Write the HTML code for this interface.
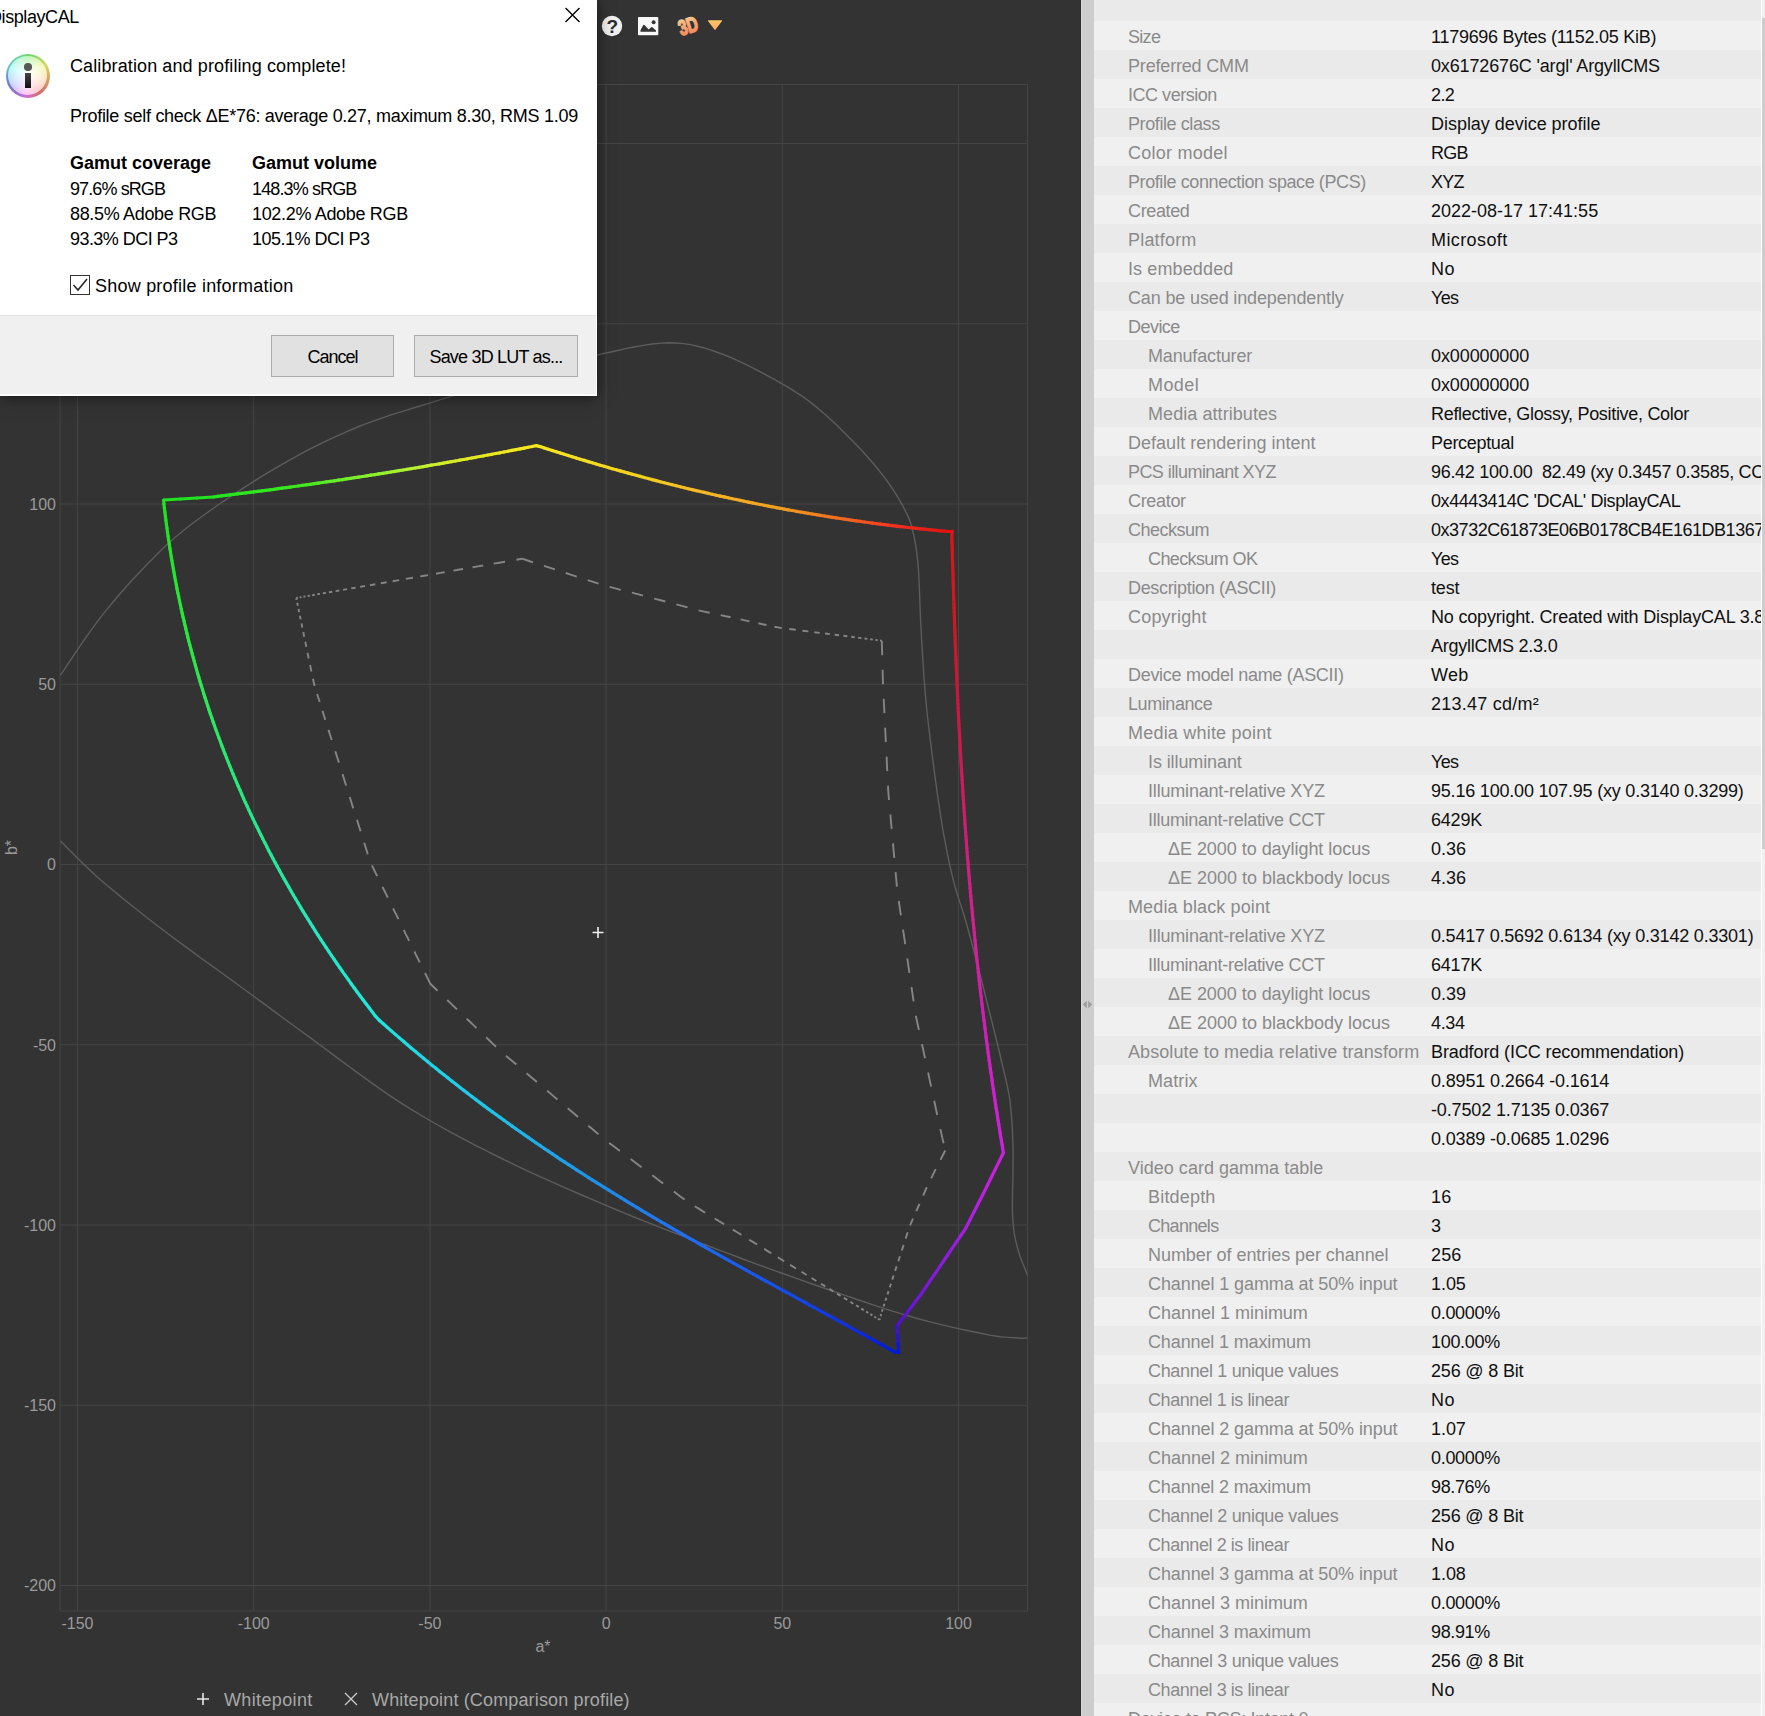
<!DOCTYPE html>
<html><head><meta charset="utf-8">
<style>
*{margin:0;padding:0;box-sizing:border-box}
html,body{width:1765px;height:1716px;overflow:hidden;background:#333333;font-family:"Liberation Sans",sans-serif}
#chart{position:absolute;left:0;top:0;width:1081px;height:1716px;background:#333333}
#strip{position:absolute;left:1080px;top:0;width:14px;height:1716px;background:#cdcdcd;border-left:1px solid #2b2b2b;box-shadow:inset 1px 0 0 #d9d9d9}
#panel{position:absolute;left:1094px;top:0;width:671px;height:1716px;background:#f0f0f0;overflow:hidden}
#panel .hdr{position:absolute;left:0;top:0;width:667px;height:21px;background:#eaeaea}
.r{position:absolute;left:0;width:667px;height:29px;background:#f0f0f0;font-size:18px;letter-spacing:-0.3px;white-space:nowrap}
.r.d{background:#eaeaea}
.r span{position:absolute;top:0;line-height:29px;padding-top:2px}
.r .l{color:#8a8a8a}
.r .v{left:337px;color:#111}
#sb{position:absolute;left:1761px;top:0;width:4px;height:1716px;background:#f0f0f0;border-left:1px solid #fff}
#sbt{position:absolute;left:1762px;top:18px;width:3px;height:831px;background:#cdcdcd}
#dlg{position:absolute;left:0;top:0;width:597px;height:396px;background:#fff;box-shadow:0 1px 14px rgba(0,0,0,0.55)}
#dlg .ft{position:absolute;left:0;top:315px;width:596px;height:79px;background:#f0f0f0;border-top:1px solid #e3e3e3}
#dlg .t{position:absolute;white-space:nowrap;font-size:18px;color:#000}
.btn{position:absolute;height:42px;background:#e1e1e1;border:1px solid #adadad;font-size:18px;color:#000;text-align:center;line-height:40px}
</style></head><body>
<div id="chart">
<svg width="1081" height="1716" style="position:absolute;left:0;top:0">
<defs><clipPath id="pc"><rect x="60" y="84.5" width="967.6" height="1526.5"/></clipPath></defs>
<path d="M77.5 84.5 V1611 M253.7 84.5 V1611 M429.9 84.5 V1611 M606.1 84.5 V1611 M782.3 84.5 V1611 M958.5 84.5 V1611 M60 143.5 H1027.6 M60 323.75 H1027.6 M60 504.0 H1027.6 M60 684.25 H1027.6 M60 864.5 H1027.6 M60 1044.75 H1027.6 M60 1225.0 H1027.6 M60 1405.25 H1027.6 M60 1585.5 H1027.6" stroke="#454545" stroke-width="1" fill="none"/>
<rect x="60.1" y="84.5" width="967.5" height="1526.5" stroke="#454545" stroke-width="1" fill="none"/>
<g font-family="Liberation Sans" font-size="16" fill="#9a9a9a"><text x="77.5" y="1629" text-anchor="middle">-150</text><text x="253.7" y="1629" text-anchor="middle">-100</text><text x="429.9" y="1629" text-anchor="middle">-50</text><text x="606.1" y="1629" text-anchor="middle">0</text><text x="782.3" y="1629" text-anchor="middle">50</text><text x="958.5" y="1629" text-anchor="middle">100</text><text x="56" y="149.3" text-anchor="end">200</text><text x="56" y="329.6" text-anchor="end">150</text><text x="56" y="509.8" text-anchor="end">100</text><text x="56" y="690.0" text-anchor="end">50</text><text x="56" y="870.3" text-anchor="end">0</text><text x="56" y="1050.5" text-anchor="end">-50</text><text x="56" y="1230.8" text-anchor="end">-100</text><text x="56" y="1411.0" text-anchor="end">-150</text><text x="56" y="1591.3" text-anchor="end">-200</text><text x="543" y="1652" text-anchor="middle">a*</text><text transform="translate(17 847.5) rotate(-90)" text-anchor="middle">b*</text></g>
<g clip-path="url(#pc)" fill="none" stroke="#5c5c5c" stroke-width="1.4"><path d="M60.3 675.4 L63.4 670.8 L67.5 664.7 L72.3 657.5 L77.7 649.4 L83.5 640.9 L89.5 632.3 L95.5 624.1 L101.3 616.4 L107.1 609.1 L113.3 601.7 L119.6 594.3 L126.0 587.0 L132.5 579.8 L138.9 572.9 L145.2 566.2 L151.3 560.0 L157.0 554.3 L162.3 549.1 L167.3 544.3 L172.4 539.7 L177.7 535.2 L183.4 530.5 L189.8 525.5 L197.1 520.0 L205.4 514.0 L214.4 507.5 L224.1 500.8 L234.3 494.0 L244.8 487.1 L255.3 480.3 L265.8 473.9 L276.0 467.8 L286.0 462.1 L295.9 456.6 L305.8 451.2 L315.8 446.1 L325.9 441.1 L336.2 436.3 L346.7 431.6 L357.6 427.0 L369.0 422.6 L381.0 418.3 L393.3 414.2 L405.8 410.3 L418.2 406.5 L430.3 402.8 L441.9 399.2 L452.8 395.8 L462.9 392.5 L472.5 389.4 L481.6 386.4 L490.3 383.6 L499.0 380.8 L507.5 378.2 L516.1 375.6 L525.0 373.0 L534.0 370.5 L543.0 368.0 L552.0 365.6 L561.0 363.3 L570.0 361.1 L579.0 359.0 L588.0 356.9 L597.0 355.0 L606.1 353.0 L615.4 351.0 L624.7 348.9 L634.0 347.0 L643.2 345.4 L652.1 344.0 L660.7 343.1 L668.8 342.8 L676.4 343.0 L683.5 343.6 L690.2 344.6 L696.7 346.0 L703.2 347.7 L709.6 349.7 L716.3 352.0 L723.2 354.5 L730.6 357.4 L738.3 360.8 L746.2 364.6 L754.2 368.6 L762.0 372.7 L769.5 376.8 L776.6 380.7 L783.0 384.4 L788.7 387.7 L793.8 390.8 L798.5 393.8 L802.8 396.7 L807.0 399.7 L811.2 402.9 L815.6 406.4 L820.2 410.2 L825.2 414.5 L830.4 419.2 L835.6 424.1 L841.0 429.3 L846.2 434.4 L851.2 439.5 L856.0 444.5 L860.4 449.1 L864.5 453.5 L868.3 457.7 L871.8 461.8 L875.2 465.8 L878.4 469.7 L881.5 473.6 L884.4 477.4 L887.2 481.2 L889.9 485.0 L892.4 488.7 L894.8 492.4 L897.1 496.0 L899.2 499.5 L901.1 502.9 L902.9 506.2 L904.6 509.4 L906.1 512.3 L907.3 514.9 L908.4 517.4 L909.4 519.8 L910.3 522.2 L911.1 524.8 L911.9 527.6 L912.7 530.8 L913.5 534.2 L914.3 537.7 L915.0 541.3 L915.7 545.2 L916.3 549.3 L916.9 553.8 L917.5 558.8 L918.0 564.3 L918.5 570.5 L918.9 577.4 L919.2 584.7 L919.5 592.4 L919.8 600.4 L920.1 608.4 L920.4 616.3 L920.8 624.0 L921.2 631.6 L921.6 639.3 L922.1 647.0 L922.5 654.7 L923.0 662.4 L923.5 670.0 L924.0 677.5 L924.6 684.8 L925.2 691.7 L925.7 698.2 L926.3 704.4 L926.9 710.7 L927.6 717.1 L928.3 723.8 L929.2 731.2 L930.2 739.4 L931.4 748.7 L932.7 759.0 L934.1 769.9 L935.6 781.2 L937.2 792.5 L938.8 803.6 L940.3 813.9 L941.8 823.3 L943.2 831.8 L944.7 839.7 L946.1 847.2 L947.5 854.3 L948.9 861.0 L950.3 867.5 L951.8 873.8 L953.3 880.0 L954.8 885.8 L956.3 891.0 L957.8 895.9 L959.3 900.6 L960.9 905.4 L962.5 910.4 L964.2 915.8 L966.0 922.0 L967.9 928.7 L969.7 935.5 L971.7 942.7 L973.7 950.2 L975.8 958.2 L978.0 966.5 L980.3 975.5 L982.7 985.0 L985.4 995.7 L988.4 1007.9 L991.7 1020.9 L995.0 1034.2 L998.2 1047.2 L1001.1 1059.5 L1003.7 1070.4 L1005.8 1079.4 L1007.3 1086.3 L1008.4 1091.4 L1009.2 1095.3 L1009.7 1098.4 L1010.1 1101.0 L1010.3 1103.7 L1010.6 1106.8 L1011.0 1110.8 L1011.4 1115.4 L1011.8 1120.1 L1012.1 1124.9 L1012.4 1129.8 L1012.6 1135.0 L1012.8 1140.6 L1013.0 1146.5 L1013.1 1152.8 L1013.1 1159.9 L1013.0 1167.8 L1012.9 1176.3 L1012.7 1184.9 L1012.5 1193.5 L1012.4 1201.8 L1012.4 1209.3 L1012.6 1215.8 L1012.9 1221.3 L1013.3 1226.0 L1013.8 1230.2 L1014.3 1233.9 L1015.0 1237.3 L1015.7 1240.6 L1016.5 1244.0 L1017.4 1247.6 L1018.5 1251.5 L1019.8 1255.5 L1021.3 1259.6 L1022.8 1263.6 L1024.4 1267.3 L1025.7 1270.7 L1026.9 1273.5 L1027.7 1275.6"/><path d="M60.3 840.8 L63.3 843.8 L67.1 847.7 L71.7 852.3 L76.8 857.4 L82.4 863.0 L88.5 868.8 L94.8 874.7 L101.3 880.5 L108.1 886.3 L115.5 892.4 L123.2 898.8 L131.3 905.2 L139.6 911.8 L148.1 918.5 L156.7 925.2 L165.4 931.8 L174.3 938.5 L183.7 945.4 L193.3 952.4 L203.0 959.5 L212.6 966.4 L222.1 973.3 L231.3 979.9 L240.0 986.2 L247.9 992.0 L255.0 997.2 L261.7 1002.1 L268.2 1006.9 L274.9 1011.9 L282.2 1017.2 L290.4 1023.2 L299.8 1030.0 L310.5 1037.9 L322.4 1046.7 L335.0 1056.1 L348.3 1066.0 L361.8 1075.9 L375.4 1085.6 L388.7 1094.8 L401.6 1103.3 L414.1 1111.1 L426.4 1118.5 L438.7 1125.5 L450.9 1132.3 L463.2 1138.9 L475.5 1145.3 L488.0 1151.7 L500.6 1158.0 L513.6 1164.3 L526.9 1170.6 L540.5 1176.8 L554.1 1182.9 L567.5 1188.8 L580.5 1194.5 L593.1 1199.8 L604.9 1204.9 L615.8 1209.5 L625.8 1213.7 L635.2 1217.5 L644.2 1221.2 L653.3 1224.7 L662.6 1228.3 L672.4 1232.1 L683.0 1236.2 L694.3 1240.6 L705.9 1245.0 L717.9 1249.6 L730.2 1254.2 L742.8 1259.0 L755.8 1263.8 L769.1 1268.6 L782.7 1273.5 L797.1 1278.6 L812.3 1284.0 L828.2 1289.5 L844.3 1295.1 L860.2 1300.5 L875.5 1305.6 L890.0 1310.3 L903.3 1314.4 L915.5 1318.0 L927.2 1321.1 L938.2 1323.9 L948.5 1326.4 L958.2 1328.6 L967.2 1330.5 L975.5 1332.2 L983.0 1333.8 L989.6 1335.1 L995.4 1336.0 L1000.3 1336.7 L1004.5 1337.1 L1008.3 1337.4 L1011.6 1337.6 L1014.6 1337.8 L1017.4 1338.0 L1019.9 1338.2 L1021.9 1338.2 L1023.5 1338.2 L1024.7 1338.1 L1025.7 1337.9 L1026.4 1337.8 L1027.1 1337.7 L1027.7 1337.6"/></g>
<path d="M296.2 598.0 L297.9 597.7 M299.6 597.4 L301.5 597.1 M303.4 596.7 L305.5 596.4 M307.6 596.0 L309.9 595.6 M312.2 595.2 L314.7 594.8 M317.3 594.3 L320.0 593.9 M322.8 593.4 L325.9 592.8 M328.9 592.3 L332.3 591.7 M335.6 591.1 L339.3 590.5 M343.0 589.9 L347.1 589.1 M351.2 588.4 L355.6 587.7 M360.1 586.9 L365.0 586.0 M369.9 585.2 L375.3 584.2 M380.8 583.3 L386.7 582.3 M392.7 581.2 L399.2 580.1 M405.8 578.9 L413.0 577.7 M420.2 576.4 L424.1 575.7 L428.1 575.1 M436.0 573.7 L440.4 572.9 L444.7 572.2 M453.4 570.6 L458.2 569.8 L463.0 569.0 M472.6 567.3 L477.9 566.4 L483.2 565.5 M493.7 563.6 L499.4 562.7 L505.0 561.7 M516.4 559.7 L522.1 558.7 M522.1 558.7 L527.6 560.5 L533.0 562.3 M544.0 565.8 L549.4 567.6 L554.9 569.4 M565.8 573.0 L571.3 574.8 L576.8 576.6 M587.7 580.1 L593.1 581.9 L598.6 583.7 M609.7 586.8 L615.2 588.3 L620.8 589.8 M631.9 592.7 L637.5 594.2 L643.0 595.6 M654.2 598.6 L659.7 600.0 L665.3 601.5 M676.4 604.4 L682.0 605.9 L687.5 607.4 M698.6 610.3 L704.1 611.6 L709.7 612.8 M720.7 615.1 L725.7 616.2 L730.6 617.3 M740.6 619.4 L745.0 620.4 L749.5 621.4 M758.4 623.3 L762.5 624.2 L766.5 625.0 M774.5 626.8 L781.8 628.1 M789.2 629.0 L795.8 629.8 M802.4 630.7 L808.4 631.4 M814.3 632.2 L819.7 632.9 M825.0 633.5 L829.9 634.1 M834.7 634.8 L839.0 635.3 M843.4 635.8 L847.3 636.3 M851.2 636.8 L854.7 637.3 M858.2 637.7 L861.4 638.1 M864.5 638.5 L867.4 638.9 M870.2 639.2 L872.8 639.6 M875.4 639.9 L877.7 640.2 M880.0 640.5 L881.8 640.7 M881.8 640.7 L881.9 645.5 L882.1 650.4 L882.2 655.2 M882.6 669.7 L882.7 674.5 L882.9 679.4 L883.0 684.2 M883.7 698.7 L883.9 703.5 L884.2 708.3 L884.4 713.1 M885.1 727.6 L885.4 732.5 L885.6 737.3 L885.8 742.1 M886.6 756.6 L886.8 761.4 L887.0 766.3 L887.3 771.1 M888.0 785.6 L888.2 790.4 L888.6 795.2 L889.0 800.0 M890.4 814.5 L890.8 819.3 L891.2 824.1 L891.7 828.9 M893.0 843.3 L893.4 848.2 L893.8 853.0 L894.3 857.8 M895.6 872.2 L896.0 877.0 L896.5 881.9 L896.9 886.7 M898.8 901.0 L899.5 905.8 L900.2 910.6 L900.9 915.4 M903.0 929.7 L903.8 934.5 L904.5 939.3 L905.2 944.1 M907.3 958.4 L908.0 963.2 L908.7 968.0 L909.4 972.8 M911.5 987.1 L912.2 991.9 L912.9 996.7 L913.6 1001.4 M915.8 1015.8 L916.8 1020.5 L917.9 1025.2 L918.9 1029.9 M921.9 1044.1 L923.0 1048.8 L924.0 1053.6 L925.0 1058.3 M928.1 1072.5 L929.1 1077.2 L930.1 1081.9 L931.1 1086.6 M934.2 1100.8 L935.2 1105.5 L936.2 1110.3 L937.2 1115.0 M940.4 1129.1 L941.4 1133.9 L942.5 1138.6 L943.6 1143.3 M945.2 1150.5 L942.8 1155.2 L940.5 1159.9 M935.7 1169.2 L933.5 1173.7 L931.2 1178.2 M926.8 1187.2 L925.0 1191.4 L923.2 1195.5 M919.5 1203.8 L917.9 1207.5 L916.2 1211.2 M913.0 1218.7 L910.0 1225.4 M907.7 1232.3 L905.6 1238.6 M903.6 1244.9 L901.8 1250.5 M899.9 1256.2 L898.3 1261.2 M896.6 1266.3 L895.1 1270.9 M893.6 1275.5 L892.3 1279.6 M891.0 1283.7 L889.8 1287.4 M888.6 1291.1 L887.5 1294.4 M886.4 1297.8 L885.4 1300.8 M884.4 1303.8 L883.6 1306.5 M882.7 1309.2 L881.9 1311.6 M881.2 1314.0 L880.6 1316.3 M880.0 1318.5 L879.6 1319.8 M879.6 1319.8 L877.9 1318.8 M876.2 1317.7 L874.3 1316.6 M872.4 1315.4 L870.4 1314.1 M868.3 1312.9 L866.0 1311.5 M863.8 1310.1 L861.3 1308.6 M858.8 1307.0 L856.0 1305.3 M853.3 1303.7 L850.3 1301.8 M847.3 1299.9 L843.9 1297.9 M840.6 1295.9 L837.0 1293.6 M833.3 1291.4 L829.3 1288.9 M825.3 1286.4 L820.9 1283.7 M816.4 1281.0 L811.6 1278.0 M806.7 1275.0 L801.4 1271.8 M796.0 1268.5 L790.1 1264.9 M784.2 1261.2 L777.8 1257.3 M771.3 1253.3 L767.7 1251.1 L764.2 1248.9 M757.1 1244.5 L753.2 1242.1 L749.2 1239.7 M741.4 1234.9 L737.1 1232.3 L732.8 1229.6 M724.2 1224.3 L719.4 1221.4 L714.7 1218.5 M705.2 1212.7 L701.8 1210.6 L698.3 1208.4 L694.8 1206.3 M684.6 1199.5 L681.0 1196.9 L677.4 1194.2 L673.9 1191.5 M663.1 1183.4 L659.5 1180.7 L655.9 1178.0 L652.3 1175.3 M641.5 1167.2 L637.9 1164.5 L634.3 1161.8 L630.7 1159.1 M619.9 1151.0 L616.3 1148.3 L612.7 1145.6 L609.1 1142.9 M598.6 1134.4 L595.2 1131.5 L591.7 1128.6 L588.3 1125.7 M578.0 1117.0 L574.6 1114.0 L571.1 1111.1 L567.7 1108.2 M557.4 1099.5 L554.0 1096.6 L550.6 1093.6 L547.1 1090.7 M536.9 1082.0 L533.4 1079.1 L530.0 1076.2 L526.6 1073.3 M516.3 1064.5 L512.8 1061.6 L509.4 1058.7 L506.0 1055.8 M496.0 1046.7 L492.7 1043.6 L489.5 1040.5 L486.2 1037.4 M476.5 1028.1 L473.2 1024.9 L470.0 1021.8 L466.7 1018.7 M457.0 1009.4 L453.7 1006.3 L450.5 1003.1 L447.2 1000.0 M437.5 990.7 L433.9 987.2 L430.3 983.8 M430.3 983.8 L428.5 980.2 L426.8 976.6 L425.0 973.0 M419.7 962.3 L417.9 958.7 L416.1 955.1 L414.4 951.5 M409.1 940.8 L407.3 937.2 L405.5 933.6 L403.8 930.0 M398.4 919.2 L396.7 915.6 L394.9 912.1 L393.1 908.5 M387.8 897.7 L386.1 894.1 L384.3 890.5 L382.5 886.9 M377.2 876.2 L375.4 872.6 L373.7 869.0 L371.9 865.4 M367.8 854.2 L366.6 850.3 L365.4 846.5 L364.2 842.7 M360.6 831.3 L359.4 827.5 L358.2 823.7 L357.0 819.8 M353.3 808.4 L352.1 804.6 L350.9 800.8 L349.7 797.0 M346.1 785.5 L344.9 781.7 L343.7 777.9 L342.5 774.1 M338.9 762.6 L337.1 757.0 L335.3 751.3 M331.7 740.0 L330.1 735.0 L328.5 729.9 M325.3 719.9 L323.9 715.4 L322.5 710.9 M319.7 702.0 L318.4 698.0 L317.1 694.0 M314.6 686.0 L312.9 678.8 M311.4 671.5 L310.1 665.0 M308.7 658.5 L307.5 652.7 M306.3 646.9 L305.3 641.8 M304.2 636.7 L303.3 632.1 M302.3 627.5 L301.5 623.4 M300.6 619.4 L299.9 615.7 M299.1 612.1 L298.5 608.9 M297.8 605.7 L297.2 602.8 M296.6 599.9 L296.2 598.0" fill="none" stroke="#858585" stroke-width="1.9"/>
<g fill="none" stroke-width="3.2" stroke-linecap="round" stroke-linejoin="round"><path d="M163.8 500.0 L172.1 499.5" stroke="rgb(32, 226, 32)"/><path d="M172.1 499.5 L180.4 499.0" stroke="rgb(33, 226, 32)"/><path d="M180.4 499.0 L188.7 498.5" stroke="rgb(33, 226, 32)"/><path d="M188.7 498.5 L196.9 498.0" stroke="rgb(34, 227, 32)"/><path d="M196.9 498.0 L205.2 497.5" stroke="rgb(35, 227, 32)"/><path d="M205.2 497.5 L213.5 497.0" stroke="rgb(35, 227, 32)"/><path d="M213.5 497.0 L217.5 496.4" stroke="rgb(36, 228, 32)"/><path d="M217.5 496.4 L221.6 495.9" stroke="rgb(37, 228, 32)"/><path d="M221.6 495.9 L225.6 495.4" stroke="rgb(39, 228, 32)"/><path d="M225.6 495.4 L229.6 494.9" stroke="rgb(40, 228, 32)"/><path d="M229.6 494.9 L233.7 494.4" stroke="rgb(41, 228, 32)"/><path d="M233.7 494.4 L237.7 493.9" stroke="rgb(43, 229, 32)"/><path d="M237.7 493.9 L241.7 493.4" stroke="rgb(44, 229, 32)"/><path d="M241.7 493.4 L245.8 492.9" stroke="rgb(45, 229, 32)"/><path d="M245.8 492.9 L249.8 492.4" stroke="rgb(46, 229, 32)"/><path d="M249.8 492.4 L253.8 491.9" stroke="rgb(48, 229, 32)"/><path d="M253.8 491.9 L257.9 491.4" stroke="rgb(49, 229, 32)"/><path d="M257.9 491.4 L261.9 490.9" stroke="rgb(50, 230, 32)"/><path d="M261.9 490.9 L265.9 490.3" stroke="rgb(52, 230, 32)"/><path d="M265.9 490.3 L270.0 489.8" stroke="rgb(53, 230, 32)"/><path d="M270.0 489.8 L274.0 489.3" stroke="rgb(54, 230, 32)"/><path d="M274.0 489.3 L278.0 488.7" stroke="rgb(55, 230, 32)"/><path d="M278.0 488.7 L282.1 488.2" stroke="rgb(57, 231, 32)"/><path d="M282.1 488.2 L286.1 487.6" stroke="rgb(58, 231, 32)"/><path d="M286.1 487.6 L290.1 487.1" stroke="rgb(59, 231, 32)"/><path d="M290.1 487.1 L294.2 486.5" stroke="rgb(61, 231, 32)"/><path d="M294.2 486.5 L298.2 486.0" stroke="rgb(62, 231, 32)"/><path d="M298.2 486.0 L302.2 485.4" stroke="rgb(63, 231, 32)"/><path d="M302.2 485.4 L306.3 484.8" stroke="rgb(67, 232, 32)"/><path d="M306.3 484.8 L310.3 484.3" stroke="rgb(71, 232, 33)"/><path d="M310.3 484.3 L314.3 483.7" stroke="rgb(76, 233, 35)"/><path d="M314.3 483.7 L318.4 483.1" stroke="rgb(80, 234, 36)"/><path d="M318.4 483.1 L322.4 482.5" stroke="rgb(84, 234, 37)"/><path d="M322.4 482.5 L326.4 481.9" stroke="rgb(89, 235, 38)"/><path d="M326.4 481.9 L330.5 481.4" stroke="rgb(93, 235, 39)"/><path d="M330.5 481.4 L334.5 480.8" stroke="rgb(97, 236, 40)"/><path d="M334.5 480.8 L338.5 480.2" stroke="rgb(101, 236, 41)"/><path d="M338.5 480.2 L342.6 479.6" stroke="rgb(106, 237, 42)"/><path d="M342.6 479.6 L346.6 478.9" stroke="rgb(110, 237, 43)"/><path d="M346.6 478.9 L350.6 478.3" stroke="rgb(114, 238, 44)"/><path d="M350.6 478.3 L354.7 477.7" stroke="rgb(119, 238, 45)"/><path d="M354.7 477.7 L358.7 477.1" stroke="rgb(123, 239, 46)"/><path d="M358.7 477.1 L362.7 476.5" stroke="rgb(127, 239, 47)"/><path d="M362.7 476.5 L366.8 475.8" stroke="rgb(132, 240, 48)"/><path d="M366.8 475.8 L370.8 475.2" stroke="rgb(136, 240, 48)"/><path d="M370.8 475.2 L374.9 474.6" stroke="rgb(140, 240, 48)"/><path d="M374.9 474.6 L378.9 473.9" stroke="rgb(144, 240, 48)"/><path d="M378.9 473.9 L382.9 473.3" stroke="rgb(148, 240, 48)"/><path d="M382.9 473.3 L387.0 472.6" stroke="rgb(153, 240, 48)"/><path d="M387.0 472.6 L391.0 472.0" stroke="rgb(157, 240, 48)"/><path d="M391.0 472.0 L395.0 471.3" stroke="rgb(161, 240, 48)"/><path d="M395.0 471.3 L399.1 470.7" stroke="rgb(165, 240, 48)"/><path d="M399.1 470.7 L403.1 470.0" stroke="rgb(169, 240, 48)"/><path d="M403.1 470.0 L407.1 469.3" stroke="rgb(173, 240, 48)"/><path d="M407.1 469.3 L411.2 468.6" stroke="rgb(178, 240, 48)"/><path d="M411.2 468.6 L415.2 468.0" stroke="rgb(182, 240, 48)"/><path d="M415.2 468.0 L419.2 467.3" stroke="rgb(186, 240, 48)"/><path d="M419.2 467.3 L423.3 466.6" stroke="rgb(190, 240, 48)"/><path d="M423.3 466.6 L427.3 465.9" stroke="rgb(194, 240, 48)"/><path d="M427.3 465.9 L431.3 465.2" stroke="rgb(199, 240, 48)"/><path d="M431.3 465.2 L435.4 464.5" stroke="rgb(201, 239, 47)"/><path d="M435.4 464.5 L439.4 463.8" stroke="rgb(204, 238, 45)"/><path d="M439.4 463.8 L443.4 463.1" stroke="rgb(206, 238, 44)"/><path d="M443.4 463.1 L447.5 462.4" stroke="rgb(209, 237, 43)"/><path d="M447.5 462.4 L451.5 461.7" stroke="rgb(211, 237, 42)"/><path d="M451.5 461.7 L455.5 461.0" stroke="rgb(214, 236, 40)"/><path d="M455.5 461.0 L459.6 460.2" stroke="rgb(217, 235, 39)"/><path d="M459.6 460.2 L463.6 459.5" stroke="rgb(219, 235, 38)"/><path d="M463.6 459.5 L467.6 458.8" stroke="rgb(222, 234, 36)"/><path d="M467.6 458.8 L471.7 458.0" stroke="rgb(224, 233, 35)"/><path d="M471.7 458.0 L475.7 457.3" stroke="rgb(227, 233, 34)"/><path d="M475.7 457.3 L479.7 456.5" stroke="rgb(229, 232, 33)"/><path d="M479.7 456.5 L483.8 455.8" stroke="rgb(232, 232, 32)"/><path d="M483.8 455.8 L487.8 455.0" stroke="rgb(233, 232, 32)"/><path d="M487.8 455.0 L491.8 454.3" stroke="rgb(234, 232, 32)"/><path d="M491.8 454.3 L495.9 453.5" stroke="rgb(235, 232, 32)"/><path d="M495.9 453.5 L499.9 452.8" stroke="rgb(236, 232, 32)"/><path d="M499.9 452.8 L503.9 452.0" stroke="rgb(237, 232, 32)"/><path d="M503.9 452.0 L508.0 451.2" stroke="rgb(239, 232, 32)"/><path d="M508.0 451.2 L512.0 450.4" stroke="rgb(240, 232, 32)"/><path d="M512.0 450.4 L516.0 449.6" stroke="rgb(241, 232, 32)"/><path d="M516.0 449.6 L520.1 448.9" stroke="rgb(242, 232, 32)"/><path d="M520.1 448.9 L524.1 448.1" stroke="rgb(243, 232, 32)"/><path d="M524.1 448.1 L528.1 447.3" stroke="rgb(245, 232, 32)"/><path d="M528.1 447.3 L532.2 446.5" stroke="rgb(246, 232, 32)"/><path d="M532.2 446.5 L536.2 445.6" stroke="rgb(247, 232, 32)"/><path d="M536.2 445.6 L540.2 446.6" stroke="rgb(247, 231, 32)"/><path d="M540.2 446.6 L544.2 447.9" stroke="rgb(247, 230, 32)"/><path d="M544.2 447.9 L548.2 449.2" stroke="rgb(247, 229, 32)"/><path d="M548.2 449.2 L552.2 450.5" stroke="rgb(247, 228, 32)"/><path d="M552.2 450.5 L556.2 451.8" stroke="rgb(247, 228, 32)"/><path d="M556.2 451.8 L560.2 453.0" stroke="rgb(247, 227, 32)"/><path d="M560.2 453.0 L564.2 454.3" stroke="rgb(247, 226, 32)"/><path d="M564.2 454.3 L568.2 455.5" stroke="rgb(246, 225, 32)"/><path d="M568.2 455.5 L572.2 456.8" stroke="rgb(246, 224, 32)"/><path d="M572.2 456.8 L576.2 458.0" stroke="rgb(246, 223, 32)"/><path d="M576.2 458.0 L580.2 459.2" stroke="rgb(246, 222, 32)"/><path d="M580.2 459.2 L584.2 460.4" stroke="rgb(246, 221, 32)"/><path d="M584.2 460.4 L588.2 461.6" stroke="rgb(246, 221, 32)"/><path d="M588.2 461.6 L592.2 462.8" stroke="rgb(246, 220, 32)"/><path d="M592.2 462.8 L596.2 464.0" stroke="rgb(245, 219, 32)"/><path d="M596.2 464.0 L600.2 465.2" stroke="rgb(245, 218, 32)"/><path d="M600.2 465.2 L604.2 466.3" stroke="rgb(245, 217, 32)"/><path d="M604.2 466.3 L608.2 467.5" stroke="rgb(245, 216, 32)"/><path d="M608.2 467.5 L612.2 468.7" stroke="rgb(245, 215, 32)"/><path d="M612.2 468.7 L616.2 469.8" stroke="rgb(245, 214, 32)"/><path d="M616.2 469.8 L620.2 470.9" stroke="rgb(245, 214, 32)"/><path d="M620.2 470.9 L624.2 472.0" stroke="rgb(244, 213, 32)"/><path d="M624.2 472.0 L628.2 473.1" stroke="rgb(244, 212, 32)"/><path d="M628.2 473.1 L632.2 474.2" stroke="rgb(244, 211, 32)"/><path d="M632.2 474.2 L636.2 475.3" stroke="rgb(244, 210, 32)"/><path d="M636.2 475.3 L640.2 476.4" stroke="rgb(244, 209, 32)"/><path d="M640.2 476.4 L644.2 477.5" stroke="rgb(244, 208, 32)"/><path d="M644.2 477.5 L648.2 478.5" stroke="rgb(244, 208, 32)"/><path d="M648.2 478.5 L652.2 479.6" stroke="rgb(244, 206, 32)"/><path d="M652.2 479.6 L656.2 480.6" stroke="rgb(244, 204, 33)"/><path d="M656.2 480.6 L660.2 481.7" stroke="rgb(244, 202, 33)"/><path d="M660.2 481.7 L664.2 482.7" stroke="rgb(244, 200, 34)"/><path d="M664.2 482.7 L668.2 483.7" stroke="rgb(244, 199, 34)"/><path d="M668.2 483.7 L672.2 484.7" stroke="rgb(244, 197, 35)"/><path d="M672.2 484.7 L676.2 485.7" stroke="rgb(245, 195, 36)"/><path d="M676.2 485.7 L680.2 486.7" stroke="rgb(245, 193, 36)"/><path d="M680.2 486.7 L684.2 487.7" stroke="rgb(245, 192, 37)"/><path d="M684.2 487.7 L688.2 488.7" stroke="rgb(245, 190, 37)"/><path d="M688.2 488.7 L692.2 489.6" stroke="rgb(245, 188, 38)"/><path d="M692.2 489.6 L696.2 490.6" stroke="rgb(245, 186, 39)"/><path d="M696.2 490.6 L700.2 491.5" stroke="rgb(245, 184, 39)"/><path d="M700.2 491.5 L704.2 492.4" stroke="rgb(245, 183, 39)"/><path d="M704.2 492.4 L708.2 493.4" stroke="rgb(245, 182, 39)"/><path d="M708.2 493.4 L712.2 494.3" stroke="rgb(245, 180, 38)"/><path d="M712.2 494.3 L716.2 495.2" stroke="rgb(244, 179, 38)"/><path d="M716.2 495.2 L720.2 496.1" stroke="rgb(244, 178, 38)"/><path d="M720.2 496.1 L724.2 496.9" stroke="rgb(244, 177, 37)"/><path d="M724.2 496.9 L728.2 497.8" stroke="rgb(244, 176, 37)"/><path d="M728.2 497.8 L732.2 498.7" stroke="rgb(243, 174, 36)"/><path d="M732.2 498.7 L736.2 499.5" stroke="rgb(243, 173, 36)"/><path d="M736.2 499.5 L740.2 500.4" stroke="rgb(243, 172, 36)"/><path d="M740.2 500.4 L744.2 501.2" stroke="rgb(242, 171, 35)"/><path d="M744.2 501.2 L748.3 502.1" stroke="rgb(242, 170, 35)"/><path d="M748.3 502.1 L752.3 502.9" stroke="rgb(242, 168, 34)"/><path d="M752.3 502.9 L756.3 503.7" stroke="rgb(241, 167, 34)"/><path d="M756.3 503.7 L760.3 504.5" stroke="rgb(241, 166, 34)"/><path d="M760.3 504.5 L764.3 505.3" stroke="rgb(241, 165, 33)"/><path d="M764.3 505.3 L768.3 506.1" stroke="rgb(240, 163, 33)"/><path d="M768.3 506.1 L772.3 506.8" stroke="rgb(240, 162, 32)"/><path d="M772.3 506.8 L776.3 507.6" stroke="rgb(240, 161, 32)"/><path d="M776.3 507.6 L780.3 508.3" stroke="rgb(240, 160, 32)"/><path d="M780.3 508.3 L784.3 509.1" stroke="rgb(240, 157, 32)"/><path d="M784.3 509.1 L788.3 509.8" stroke="rgb(240, 154, 32)"/><path d="M788.3 509.8 L792.3 510.5" stroke="rgb(240, 151, 32)"/><path d="M792.3 510.5 L796.3 511.3" stroke="rgb(240, 148, 32)"/><path d="M796.3 511.3 L800.3 512.0" stroke="rgb(240, 144, 32)"/><path d="M800.3 512.0 L804.3 512.7" stroke="rgb(240, 141, 32)"/><path d="M804.3 512.7 L808.3 513.4" stroke="rgb(240, 138, 32)"/><path d="M808.3 513.4 L812.3 514.0" stroke="rgb(240, 135, 32)"/><path d="M812.3 514.0 L816.3 514.7" stroke="rgb(240, 131, 32)"/><path d="M816.3 514.7 L820.3 515.4" stroke="rgb(240, 128, 32)"/><path d="M820.3 515.4 L824.3 516.0" stroke="rgb(240, 125, 32)"/><path d="M824.3 516.0 L828.3 516.6" stroke="rgb(240, 121, 32)"/><path d="M828.3 516.6 L832.3 517.3" stroke="rgb(240, 118, 32)"/><path d="M832.3 517.3 L836.3 517.9" stroke="rgb(240, 114, 32)"/><path d="M836.3 517.9 L840.3 518.5" stroke="rgb(240, 110, 32)"/><path d="M840.3 518.5 L844.3 519.1" stroke="rgb(240, 107, 32)"/><path d="M844.3 519.1 L848.3 519.7" stroke="rgb(240, 103, 32)"/><path d="M848.3 519.7 L852.3 520.3" stroke="rgb(240, 100, 32)"/><path d="M852.3 520.3 L856.3 520.9" stroke="rgb(240, 96, 32)"/><path d="M856.3 520.9 L860.3 521.4" stroke="rgb(240, 92, 32)"/><path d="M860.3 521.4 L864.3 522.0" stroke="rgb(240, 88, 32)"/><path d="M864.3 522.0 L868.3 522.5" stroke="rgb(240, 83, 32)"/><path d="M868.3 522.5 L872.3 523.1" stroke="rgb(240, 79, 32)"/><path d="M872.3 523.1 L876.3 523.6" stroke="rgb(240, 75, 32)"/><path d="M876.3 523.6 L880.3 524.1" stroke="rgb(240, 70, 32)"/><path d="M880.3 524.1 L884.3 524.6" stroke="rgb(240, 66, 32)"/><path d="M884.3 524.6 L888.3 525.1" stroke="rgb(240, 62, 32)"/><path d="M888.3 525.1 L892.3 525.6" stroke="rgb(240, 57, 32)"/><path d="M892.3 525.6 L896.3 526.1" stroke="rgb(240, 53, 32)"/><path d="M896.3 526.1 L900.3 526.6" stroke="rgb(240, 49, 32)"/><path d="M900.3 526.6 L904.3 527.0" stroke="rgb(239, 46, 31)"/><path d="M904.3 527.0 L908.3 527.5" stroke="rgb(237, 43, 29)"/><path d="M908.3 527.5 L912.3 527.9" stroke="rgb(236, 41, 28)"/><path d="M912.3 527.9 L916.3 528.4" stroke="rgb(235, 38, 27)"/><path d="M916.3 528.4 L920.3 528.8" stroke="rgb(234, 36, 26)"/><path d="M920.3 528.8 L924.3 529.2" stroke="rgb(233, 34, 25)"/><path d="M924.3 529.2 L928.3 529.6" stroke="rgb(231, 31, 23)"/><path d="M928.3 529.6 L932.3 530.0" stroke="rgb(230, 29, 22)"/><path d="M932.3 530.0 L936.3 530.4" stroke="rgb(229, 26, 21)"/><path d="M936.3 530.4 L940.3 530.8" stroke="rgb(228, 24, 20)"/><path d="M940.3 530.8 L944.3 531.1" stroke="rgb(227, 22, 19)"/><path d="M944.3 531.1 L948.3 531.5" stroke="rgb(225, 19, 17)"/><path d="M948.3 531.5 L952.3 531.4" stroke="rgb(224, 17, 16)"/><path d="M952.3 531.4 L951.8 535.4" stroke="rgb(215, 24, 24)"/><path d="M951.8 535.4 L951.9 539.4" stroke="rgb(215, 24, 24)"/><path d="M951.9 539.4 L952.0 543.4" stroke="rgb(215, 24, 24)"/><path d="M952.0 543.4 L952.2 547.4" stroke="rgb(214, 24, 25)"/><path d="M952.2 547.4 L952.3 551.4" stroke="rgb(214, 24, 25)"/><path d="M952.3 551.4 L952.4 555.5" stroke="rgb(213, 24, 26)"/><path d="M952.4 555.5 L952.5 559.5" stroke="rgb(213, 24, 26)"/><path d="M952.5 559.5 L952.6 563.5" stroke="rgb(213, 24, 26)"/><path d="M952.6 563.5 L952.7 567.5" stroke="rgb(212, 24, 27)"/><path d="M952.7 567.5 L952.9 571.5" stroke="rgb(212, 24, 27)"/><path d="M952.9 571.5 L953.0 575.5" stroke="rgb(212, 24, 27)"/><path d="M953.0 575.5 L953.1 579.5" stroke="rgb(211, 24, 28)"/><path d="M953.1 579.5 L953.2 583.5" stroke="rgb(211, 24, 28)"/><path d="M953.2 583.5 L953.4 587.5" stroke="rgb(211, 24, 28)"/><path d="M953.4 587.5 L953.5 591.5" stroke="rgb(210, 24, 29)"/><path d="M953.5 591.5 L953.6 595.5" stroke="rgb(210, 24, 29)"/><path d="M953.6 595.5 L953.7 599.5" stroke="rgb(209, 24, 30)"/><path d="M953.7 599.5 L953.9 603.6" stroke="rgb(209, 24, 30)"/><path d="M953.9 603.6 L954.0 607.6" stroke="rgb(209, 24, 30)"/><path d="M954.0 607.6 L954.2 611.6" stroke="rgb(208, 24, 31)"/><path d="M954.2 611.6 L954.3 615.6" stroke="rgb(208, 24, 31)"/><path d="M954.3 615.6 L954.4 619.6" stroke="rgb(208, 24, 31)"/><path d="M954.4 619.6 L954.6 623.6" stroke="rgb(207, 24, 33)"/><path d="M954.6 623.6 L954.7 627.6" stroke="rgb(207, 24, 34)"/><path d="M954.7 627.6 L954.9 631.6" stroke="rgb(206, 24, 35)"/><path d="M954.9 631.6 L955.0 635.6" stroke="rgb(206, 24, 37)"/><path d="M955.0 635.6 L955.2 639.6" stroke="rgb(205, 24, 38)"/><path d="M955.2 639.6 L955.3 643.6" stroke="rgb(205, 24, 40)"/><path d="M955.3 643.6 L955.5 647.6" stroke="rgb(204, 24, 41)"/><path d="M955.5 647.6 L955.7 651.7" stroke="rgb(204, 24, 42)"/><path d="M955.7 651.7 L955.8 655.7" stroke="rgb(203, 24, 44)"/><path d="M955.8 655.7 L956.0 659.7" stroke="rgb(203, 24, 45)"/><path d="M956.0 659.7 L956.1 663.7" stroke="rgb(202, 24, 47)"/><path d="M956.1 663.7 L956.3 667.7" stroke="rgb(202, 24, 48)"/><path d="M956.3 667.7 L956.5 671.7" stroke="rgb(202, 24, 49)"/><path d="M956.5 671.7 L956.7 675.7" stroke="rgb(201, 24, 51)"/><path d="M956.7 675.7 L956.8 679.7" stroke="rgb(201, 24, 52)"/><path d="M956.8 679.7 L957.0 683.7" stroke="rgb(200, 24, 54)"/><path d="M957.0 683.7 L957.2 687.7" stroke="rgb(200, 24, 55)"/><path d="M957.2 687.7 L957.4 691.7" stroke="rgb(200, 24, 56)"/><path d="M957.4 691.7 L957.6 695.7" stroke="rgb(200, 24, 58)"/><path d="M957.6 695.7 L957.8 699.8" stroke="rgb(200, 24, 60)"/><path d="M957.8 699.8 L957.9 703.8" stroke="rgb(200, 24, 61)"/><path d="M957.9 703.8 L958.1 707.8" stroke="rgb(200, 24, 63)"/><path d="M958.1 707.8 L958.3 711.8" stroke="rgb(200, 24, 64)"/><path d="M958.3 711.8 L958.5 715.8" stroke="rgb(201, 25, 66)"/><path d="M958.5 715.8 L958.7 719.8" stroke="rgb(201, 25, 68)"/><path d="M958.7 719.8 L958.9 723.8" stroke="rgb(201, 25, 69)"/><path d="M958.9 723.8 L959.1 727.8" stroke="rgb(201, 25, 71)"/><path d="M959.1 727.8 L959.4 731.8" stroke="rgb(201, 25, 72)"/><path d="M959.4 731.8 L959.6 735.8" stroke="rgb(202, 26, 74)"/><path d="M959.6 735.8 L959.8 739.8" stroke="rgb(202, 26, 76)"/><path d="M959.8 739.8 L960.0 743.8" stroke="rgb(202, 26, 77)"/><path d="M960.0 743.8 L960.2 747.9" stroke="rgb(202, 26, 79)"/><path d="M960.2 747.9 L960.4 751.9" stroke="rgb(202, 26, 80)"/><path d="M960.4 751.9 L960.7 755.9" stroke="rgb(202, 26, 82)"/><path d="M960.7 755.9 L960.9 759.9" stroke="rgb(203, 27, 84)"/><path d="M960.9 759.9 L961.1 763.9" stroke="rgb(203, 27, 85)"/><path d="M961.1 763.9 L961.4 767.9" stroke="rgb(203, 27, 87)"/><path d="M961.4 767.9 L961.6 771.9" stroke="rgb(203, 27, 88)"/><path d="M961.6 771.9 L961.9 775.9" stroke="rgb(203, 27, 90)"/><path d="M961.9 775.9 L962.1 779.9" stroke="rgb(204, 28, 92)"/><path d="M962.1 779.9 L962.4 783.9" stroke="rgb(204, 28, 93)"/><path d="M962.4 783.9 L962.6 787.9" stroke="rgb(204, 28, 95)"/><path d="M962.6 787.9 L962.9 791.9" stroke="rgb(204, 28, 96)"/><path d="M962.9 791.9 L963.1 796.0" stroke="rgb(204, 28, 98)"/><path d="M963.1 796.0 L963.4 800.0" stroke="rgb(204, 28, 100)"/><path d="M963.4 800.0 L963.7 804.0" stroke="rgb(205, 29, 101)"/><path d="M963.7 804.0 L963.9 808.0" stroke="rgb(205, 29, 103)"/><path d="M963.9 808.0 L964.2 812.0" stroke="rgb(205, 29, 104)"/><path d="M964.2 812.0 L964.5 816.0" stroke="rgb(205, 29, 106)"/><path d="M964.5 816.0 L964.8 820.0" stroke="rgb(205, 29, 108)"/><path d="M964.8 820.0 L965.0 824.0" stroke="rgb(205, 29, 109)"/><path d="M965.0 824.0 L965.3 828.0" stroke="rgb(206, 30, 111)"/><path d="M965.3 828.0 L965.6 832.0" stroke="rgb(206, 30, 112)"/><path d="M965.6 832.0 L965.9 836.0" stroke="rgb(206, 30, 114)"/><path d="M965.9 836.0 L966.2 840.0" stroke="rgb(206, 30, 116)"/><path d="M966.2 840.0 L966.5 844.1" stroke="rgb(206, 30, 117)"/><path d="M966.5 844.1 L966.8 848.1" stroke="rgb(207, 31, 119)"/><path d="M966.8 848.1 L967.1 852.1" stroke="rgb(207, 31, 120)"/><path d="M967.1 852.1 L967.4 856.1" stroke="rgb(207, 31, 122)"/><path d="M967.4 856.1 L967.8 860.1" stroke="rgb(207, 31, 124)"/><path d="M967.8 860.1 L968.1 864.1" stroke="rgb(207, 31, 125)"/><path d="M968.1 864.1 L968.4 868.1" stroke="rgb(207, 31, 127)"/><path d="M968.4 868.1 L968.7 872.1" stroke="rgb(208, 32, 128)"/><path d="M968.7 872.1 L969.1 876.1" stroke="rgb(208, 32, 130)"/><path d="M969.1 876.1 L969.4 880.1" stroke="rgb(208, 32, 131)"/><path d="M969.4 880.1 L969.8 884.1" stroke="rgb(208, 32, 133)"/><path d="M969.8 884.1 L970.1 888.1" stroke="rgb(208, 32, 134)"/><path d="M970.1 888.1 L970.4 892.2" stroke="rgb(208, 32, 135)"/><path d="M970.4 892.2 L970.8 896.2" stroke="rgb(208, 32, 137)"/><path d="M970.8 896.2 L971.2 900.2" stroke="rgb(208, 32, 138)"/><path d="M971.2 900.2 L971.5 904.2" stroke="rgb(208, 32, 140)"/><path d="M971.5 904.2 L971.9 908.2" stroke="rgb(208, 32, 141)"/><path d="M971.9 908.2 L972.3 912.2" stroke="rgb(208, 32, 143)"/><path d="M972.3 912.2 L972.6 916.2" stroke="rgb(208, 32, 144)"/><path d="M972.6 916.2 L973.0 920.2" stroke="rgb(208, 32, 145)"/><path d="M973.0 920.2 L973.4 924.2" stroke="rgb(208, 32, 147)"/><path d="M973.4 924.2 L973.8 928.2" stroke="rgb(208, 32, 148)"/><path d="M973.8 928.2 L974.2 932.2" stroke="rgb(208, 32, 150)"/><path d="M974.2 932.2 L974.6 936.2" stroke="rgb(208, 32, 151)"/><path d="M974.6 936.2 L975.0 940.3" stroke="rgb(208, 32, 152)"/><path d="M975.0 940.3 L975.4 944.3" stroke="rgb(208, 32, 154)"/><path d="M975.4 944.3 L975.8 948.3" stroke="rgb(208, 32, 155)"/><path d="M975.8 948.3 L976.2 952.3" stroke="rgb(208, 32, 157)"/><path d="M976.2 952.3 L976.6 956.3" stroke="rgb(208, 32, 158)"/><path d="M976.6 956.3 L977.0 960.3" stroke="rgb(208, 32, 160)"/><path d="M977.0 960.3 L977.5 964.3" stroke="rgb(208, 32, 161)"/><path d="M977.5 964.3 L977.9 968.3" stroke="rgb(208, 32, 162)"/><path d="M977.9 968.3 L978.3 972.3" stroke="rgb(208, 32, 164)"/><path d="M978.3 972.3 L978.8 976.3" stroke="rgb(208, 32, 165)"/><path d="M978.8 976.3 L979.2 980.3" stroke="rgb(208, 32, 167)"/><path d="M979.2 980.3 L979.7 984.3" stroke="rgb(208, 32, 168)"/><path d="M979.7 984.3 L980.1 988.4" stroke="rgb(208, 32, 170)"/><path d="M980.1 988.4 L980.6 992.4" stroke="rgb(208, 32, 171)"/><path d="M980.6 992.4 L981.1 996.4" stroke="rgb(208, 32, 172)"/><path d="M981.1 996.4 L981.5 1000.4" stroke="rgb(208, 32, 174)"/><path d="M981.5 1000.4 L982.0 1004.4" stroke="rgb(208, 32, 175)"/><path d="M982.0 1004.4 L982.5 1008.4" stroke="rgb(208, 32, 177)"/><path d="M982.5 1008.4 L983.0 1012.4" stroke="rgb(208, 32, 178)"/><path d="M983.0 1012.4 L983.5 1016.4" stroke="rgb(208, 32, 180)"/><path d="M983.5 1016.4 L984.0 1020.4" stroke="rgb(208, 32, 181)"/><path d="M984.0 1020.4 L984.5 1024.4" stroke="rgb(208, 32, 182)"/><path d="M984.5 1024.4 L985.0 1028.4" stroke="rgb(208, 32, 184)"/><path d="M985.0 1028.4 L985.5 1032.4" stroke="rgb(208, 32, 185)"/><path d="M985.5 1032.4 L986.0 1036.5" stroke="rgb(208, 32, 187)"/><path d="M986.0 1036.5 L986.5 1040.5" stroke="rgb(208, 32, 188)"/><path d="M986.5 1040.5 L987.1 1044.5" stroke="rgb(208, 32, 190)"/><path d="M987.1 1044.5 L987.6 1048.5" stroke="rgb(208, 32, 191)"/><path d="M987.6 1048.5 L988.1 1052.5" stroke="rgb(208, 32, 192)"/><path d="M988.1 1052.5 L988.7 1056.5" stroke="rgb(208, 32, 194)"/><path d="M988.7 1056.5 L989.2 1060.5" stroke="rgb(208, 32, 195)"/><path d="M989.2 1060.5 L989.8 1064.5" stroke="rgb(208, 32, 196)"/><path d="M989.8 1064.5 L990.3 1068.5" stroke="rgb(208, 32, 197)"/><path d="M990.3 1068.5 L990.9 1072.5" stroke="rgb(208, 32, 198)"/><path d="M990.9 1072.5 L991.5 1076.5" stroke="rgb(208, 32, 200)"/><path d="M991.5 1076.5 L992.1 1080.5" stroke="rgb(208, 32, 201)"/><path d="M992.1 1080.5 L992.6 1084.6" stroke="rgb(208, 32, 202)"/><path d="M992.6 1084.6 L993.2 1088.6" stroke="rgb(208, 32, 203)"/><path d="M993.2 1088.6 L993.8 1092.6" stroke="rgb(208, 32, 205)"/><path d="M993.8 1092.6 L994.4 1096.6" stroke="rgb(208, 32, 206)"/><path d="M994.4 1096.6 L995.0 1100.6" stroke="rgb(208, 32, 207)"/><path d="M995.0 1100.6 L995.6 1104.6" stroke="rgb(208, 32, 208)"/><path d="M995.6 1104.6 L996.2 1108.6" stroke="rgb(208, 32, 209)"/><path d="M996.2 1108.6 L996.9 1112.6" stroke="rgb(208, 32, 211)"/><path d="M996.9 1112.6 L997.5 1116.6" stroke="rgb(208, 32, 212)"/><path d="M997.5 1116.6 L998.1 1120.6" stroke="rgb(208, 32, 213)"/><path d="M998.1 1120.6 L998.8 1124.6" stroke="rgb(208, 32, 214)"/><path d="M998.8 1124.6 L999.4 1128.6" stroke="rgb(208, 32, 216)"/><path d="M999.4 1128.6 L1000.1 1132.7" stroke="rgb(208, 32, 217)"/><path d="M1000.1 1132.7 L1000.7 1136.7" stroke="rgb(208, 32, 218)"/><path d="M1000.7 1136.7 L1001.4 1140.7" stroke="rgb(208, 32, 219)"/><path d="M1001.4 1140.7 L1002.1 1144.7" stroke="rgb(208, 32, 220)"/><path d="M1002.1 1144.7 L1002.7 1148.7" stroke="rgb(208, 32, 222)"/><path d="M1002.7 1148.7 L1003.4 1152.7" stroke="rgb(208, 32, 223)"/><path d="M1003.4 1152.7 L999.3 1161.1" stroke="rgb(206, 32, 224)"/><path d="M999.3 1161.1 L995.1 1169.6" stroke="rgb(202, 32, 224)"/><path d="M995.1 1169.6 L991.0 1178.0" stroke="rgb(199, 32, 224)"/><path d="M991.0 1178.0 L986.9 1186.4" stroke="rgb(196, 32, 224)"/><path d="M986.9 1186.4 L982.7 1194.8" stroke="rgb(192, 32, 224)"/><path d="M982.7 1194.8 L978.4 1203.2" stroke="rgb(187, 32, 224)"/><path d="M978.4 1203.2 L974.2 1211.5" stroke="rgb(181, 32, 224)"/><path d="M974.2 1211.5 L969.9 1219.9" stroke="rgb(174, 32, 224)"/><path d="M969.9 1219.9 L965.7 1228.3" stroke="rgb(168, 32, 224)"/><path d="M965.7 1228.3 L961.2 1235.0" stroke="rgb(162, 32, 224)"/><path d="M961.2 1235.0 L956.7 1241.6" stroke="rgb(157, 31, 223)"/><path d="M956.7 1241.6 L952.1 1248.3" stroke="rgb(152, 30, 222)"/><path d="M952.1 1248.3 L947.6 1255.0" stroke="rgb(147, 29, 221)"/><path d="M947.6 1255.0 L943.1 1261.7" stroke="rgb(143, 29, 221)"/><path d="M943.1 1261.7 L938.6 1268.3" stroke="rgb(138, 28, 220)"/><path d="M938.6 1268.3 L934.1 1275.0" stroke="rgb(133, 27, 219)"/><path d="M934.1 1275.0 L929.5 1281.7" stroke="rgb(128, 26, 218)"/><path d="M929.5 1281.7 L925.0 1288.3" stroke="rgb(124, 26, 218)"/><path d="M925.0 1288.3 L920.5 1295.0" stroke="rgb(119, 25, 217)"/><path d="M920.5 1295.0 L914.6 1302.8" stroke="rgb(114, 24, 216)"/><path d="M914.6 1302.8 L908.7 1310.5" stroke="rgb(105, 22, 214)"/><path d="M908.7 1310.5 L902.8 1318.3" stroke="rgb(95, 19, 211)"/><path d="M902.8 1318.3 L896.9 1326.1" stroke="rgb(85, 17, 209)"/><path d="M896.9 1326.1 L897.5 1334.9" stroke="rgb(66, 17, 209)"/><path d="M897.5 1334.9 L898.0 1343.7" stroke="rgb(40, 20, 212)"/><path d="M898.0 1343.7 L898.6 1352.5" stroke="rgb(13, 22, 214)"/><path d="M898.6 1352.5 L894.6 1352.0" stroke="rgb(0, 24, 216)"/><path d="M894.6 1352.0 L890.5 1349.7" stroke="rgb(1, 26, 216)"/><path d="M890.5 1349.7 L886.5 1347.4" stroke="rgb(3, 28, 217)"/><path d="M886.5 1347.4 L882.5 1345.2" stroke="rgb(4, 30, 218)"/><path d="M882.5 1345.2 L878.5 1342.9" stroke="rgb(5, 32, 218)"/><path d="M878.5 1342.9 L874.4 1340.7" stroke="rgb(7, 34, 219)"/><path d="M874.4 1340.7 L870.4 1338.5" stroke="rgb(8, 36, 220)"/><path d="M870.4 1338.5 L866.4 1336.2" stroke="rgb(9, 38, 220)"/><path d="M866.4 1336.2 L862.4 1334.0" stroke="rgb(11, 40, 221)"/><path d="M862.4 1334.0 L858.3 1331.8" stroke="rgb(12, 42, 222)"/><path d="M858.3 1331.8 L854.3 1329.6" stroke="rgb(13, 44, 222)"/><path d="M854.3 1329.6 L850.3 1327.3" stroke="rgb(14, 46, 223)"/><path d="M850.3 1327.3 L846.3 1325.1" stroke="rgb(16, 48, 224)"/><path d="M846.3 1325.1 L842.2 1322.9" stroke="rgb(16, 50, 224)"/><path d="M842.2 1322.9 L838.2 1320.7" stroke="rgb(16, 51, 224)"/><path d="M838.2 1320.7 L834.2 1318.5" stroke="rgb(17, 53, 225)"/><path d="M834.2 1318.5 L830.2 1316.3" stroke="rgb(17, 55, 225)"/><path d="M830.2 1316.3 L826.1 1314.1" stroke="rgb(18, 57, 226)"/><path d="M826.1 1314.1 L822.1 1311.9" stroke="rgb(18, 59, 226)"/><path d="M822.1 1311.9 L818.1 1309.7" stroke="rgb(19, 61, 227)"/><path d="M818.1 1309.7 L814.1 1307.5" stroke="rgb(19, 62, 227)"/><path d="M814.1 1307.5 L810.0 1305.3" stroke="rgb(20, 64, 228)"/><path d="M810.0 1305.3 L806.0 1303.0" stroke="rgb(20, 66, 228)"/><path d="M806.0 1303.0 L802.0 1300.8" stroke="rgb(21, 68, 229)"/><path d="M802.0 1300.8 L797.9 1298.6" stroke="rgb(21, 70, 229)"/><path d="M797.9 1298.6 L793.9 1296.4" stroke="rgb(21, 71, 229)"/><path d="M793.9 1296.4 L789.9 1294.2" stroke="rgb(22, 73, 230)"/><path d="M789.9 1294.2 L785.9 1292.0" stroke="rgb(22, 75, 230)"/><path d="M785.9 1292.0 L781.8 1289.8" stroke="rgb(23, 77, 231)"/><path d="M781.8 1289.8 L777.8 1287.6" stroke="rgb(23, 79, 231)"/><path d="M777.8 1287.6 L773.8 1285.4" stroke="rgb(24, 80, 232)"/><path d="M773.8 1285.4 L769.8 1283.2" stroke="rgb(24, 81, 232)"/><path d="M769.8 1283.2 L765.7 1281.0" stroke="rgb(24, 83, 232)"/><path d="M765.7 1281.0 L761.7 1278.8" stroke="rgb(25, 84, 233)"/><path d="M761.7 1278.8 L757.7 1276.5" stroke="rgb(25, 85, 233)"/><path d="M757.7 1276.5 L753.7 1274.3" stroke="rgb(25, 87, 233)"/><path d="M753.7 1274.3 L749.6 1272.1" stroke="rgb(26, 88, 234)"/><path d="M749.6 1272.1 L745.6 1269.9" stroke="rgb(26, 89, 234)"/><path d="M745.6 1269.9 L741.6 1267.6" stroke="rgb(26, 91, 234)"/><path d="M741.6 1267.6 L737.6 1265.4" stroke="rgb(27, 92, 235)"/><path d="M737.6 1265.4 L733.5 1263.1" stroke="rgb(27, 93, 235)"/><path d="M733.5 1263.1 L729.5 1260.9" stroke="rgb(27, 95, 235)"/><path d="M729.5 1260.9 L725.5 1258.7" stroke="rgb(28, 96, 236)"/><path d="M725.5 1258.7 L721.4 1256.4" stroke="rgb(28, 97, 236)"/><path d="M721.4 1256.4 L717.4 1254.1" stroke="rgb(28, 99, 236)"/><path d="M717.4 1254.1 L713.4 1251.9" stroke="rgb(29, 100, 237)"/><path d="M713.4 1251.9 L709.4 1249.6" stroke="rgb(29, 101, 237)"/><path d="M709.4 1249.6 L705.3 1247.3" stroke="rgb(29, 102, 237)"/><path d="M705.3 1247.3 L701.3 1245.0" stroke="rgb(30, 104, 238)"/><path d="M701.3 1245.0 L697.3 1242.7" stroke="rgb(30, 105, 238)"/><path d="M697.3 1242.7 L693.3 1240.4" stroke="rgb(30, 106, 238)"/><path d="M693.3 1240.4 L689.2 1238.1" stroke="rgb(31, 108, 239)"/><path d="M689.2 1238.1 L685.2 1235.8" stroke="rgb(31, 109, 239)"/><path d="M685.2 1235.8 L681.2 1233.5" stroke="rgb(31, 110, 239)"/><path d="M681.2 1233.5 L677.2 1231.2" stroke="rgb(32, 112, 239)"/><path d="M677.2 1231.2 L673.1 1228.9" stroke="rgb(32, 113, 239)"/><path d="M673.1 1228.9 L669.1 1226.5" stroke="rgb(32, 115, 239)"/><path d="M669.1 1226.5 L665.1 1224.2" stroke="rgb(32, 116, 238)"/><path d="M665.1 1224.2 L661.1 1221.8" stroke="rgb(32, 118, 238)"/><path d="M661.1 1221.8 L657.0 1219.4" stroke="rgb(32, 119, 238)"/><path d="M657.0 1219.4 L653.0 1217.1" stroke="rgb(32, 121, 237)"/><path d="M653.0 1217.1 L649.0 1214.7" stroke="rgb(32, 122, 237)"/><path d="M649.0 1214.7 L645.0 1212.3" stroke="rgb(32, 124, 236)"/><path d="M645.0 1212.3 L640.9 1209.9" stroke="rgb(32, 125, 236)"/><path d="M640.9 1209.9 L636.9 1207.4" stroke="rgb(32, 127, 236)"/><path d="M636.9 1207.4 L632.9 1205.0" stroke="rgb(32, 128, 235)"/><path d="M632.9 1205.0 L628.8 1202.6" stroke="rgb(32, 130, 235)"/><path d="M628.8 1202.6 L624.8 1200.1" stroke="rgb(32, 131, 235)"/><path d="M624.8 1200.1 L620.8 1197.7" stroke="rgb(32, 133, 234)"/><path d="M620.8 1197.7 L616.8 1195.2" stroke="rgb(32, 134, 234)"/><path d="M616.8 1195.2 L612.7 1192.7" stroke="rgb(32, 136, 233)"/><path d="M612.7 1192.7 L608.7 1190.2" stroke="rgb(32, 137, 233)"/><path d="M608.7 1190.2 L604.7 1187.7" stroke="rgb(32, 139, 233)"/><path d="M604.7 1187.7 L600.7 1185.2" stroke="rgb(32, 140, 232)"/><path d="M600.7 1185.2 L596.6 1182.7" stroke="rgb(32, 142, 232)"/><path d="M596.6 1182.7 L592.6 1180.1" stroke="rgb(32, 143, 232)"/><path d="M592.6 1180.1 L588.6 1177.6" stroke="rgb(32, 145, 232)"/><path d="M588.6 1177.6 L584.6 1175.0" stroke="rgb(32, 147, 232)"/><path d="M584.6 1175.0 L580.5 1172.4" stroke="rgb(32, 149, 232)"/><path d="M580.5 1172.4 L576.5 1169.8" stroke="rgb(32, 151, 232)"/><path d="M576.5 1169.8 L572.5 1167.2" stroke="rgb(32, 153, 232)"/><path d="M572.5 1167.2 L568.5 1164.6" stroke="rgb(32, 156, 232)"/><path d="M568.5 1164.6 L564.4 1161.9" stroke="rgb(32, 158, 232)"/><path d="M564.4 1161.9 L560.4 1159.3" stroke="rgb(32, 160, 232)"/><path d="M560.4 1159.3 L556.4 1156.6" stroke="rgb(32, 162, 232)"/><path d="M556.4 1156.6 L552.4 1153.9" stroke="rgb(32, 164, 232)"/><path d="M552.4 1153.9 L548.3 1151.2" stroke="rgb(32, 166, 232)"/><path d="M548.3 1151.2 L544.3 1148.5" stroke="rgb(32, 168, 232)"/><path d="M544.3 1148.5 L540.3 1145.7" stroke="rgb(32, 170, 232)"/><path d="M540.3 1145.7 L536.2 1143.0" stroke="rgb(32, 172, 232)"/><path d="M536.2 1143.0 L532.2 1140.2" stroke="rgb(32, 174, 232)"/><path d="M532.2 1140.2 L528.2 1137.4" stroke="rgb(32, 176, 232)"/><path d="M528.2 1137.4 L524.2 1134.6" stroke="rgb(32, 178, 232)"/><path d="M524.2 1134.6 L520.1 1131.8" stroke="rgb(32, 180, 232)"/><path d="M520.1 1131.8 L516.1 1129.0" stroke="rgb(32, 183, 232)"/><path d="M516.1 1129.0 L512.1 1126.1" stroke="rgb(32, 185, 232)"/><path d="M512.1 1126.1 L508.1 1123.2" stroke="rgb(32, 187, 232)"/><path d="M508.1 1123.2 L504.0 1120.3" stroke="rgb(32, 189, 232)"/><path d="M504.0 1120.3 L500.0 1117.4" stroke="rgb(32, 191, 232)"/><path d="M500.0 1117.4 L496.0 1114.5" stroke="rgb(32, 192, 232)"/><path d="M496.0 1114.5 L492.0 1111.6" stroke="rgb(32, 194, 232)"/><path d="M492.0 1111.6 L487.9 1108.6" stroke="rgb(32, 195, 232)"/><path d="M487.9 1108.6 L483.9 1105.6" stroke="rgb(32, 196, 232)"/><path d="M483.9 1105.6 L479.9 1102.6" stroke="rgb(32, 197, 232)"/><path d="M479.9 1102.6 L475.9 1099.6" stroke="rgb(32, 198, 232)"/><path d="M475.9 1099.6 L471.8 1096.5" stroke="rgb(32, 200, 232)"/><path d="M471.8 1096.5 L467.8 1093.4" stroke="rgb(32, 201, 232)"/><path d="M467.8 1093.4 L463.8 1090.4" stroke="rgb(32, 202, 232)"/><path d="M463.8 1090.4 L459.7 1087.3" stroke="rgb(32, 203, 232)"/><path d="M459.7 1087.3 L455.7 1084.1" stroke="rgb(32, 205, 232)"/><path d="M455.7 1084.1 L451.7 1081.0" stroke="rgb(32, 206, 232)"/><path d="M451.7 1081.0 L447.7 1077.8" stroke="rgb(32, 207, 232)"/><path d="M447.7 1077.8 L443.6 1074.6" stroke="rgb(32, 208, 232)"/><path d="M443.6 1074.6 L439.6 1071.4" stroke="rgb(32, 209, 232)"/><path d="M439.6 1071.4 L435.6 1068.1" stroke="rgb(32, 211, 232)"/><path d="M435.6 1068.1 L431.6 1064.9" stroke="rgb(32, 212, 232)"/><path d="M431.6 1064.9 L427.5 1061.6" stroke="rgb(32, 213, 232)"/><path d="M427.5 1061.6 L423.5 1058.3" stroke="rgb(32, 214, 232)"/><path d="M423.5 1058.3 L419.5 1054.9" stroke="rgb(32, 216, 231)"/><path d="M419.5 1054.9 L415.5 1051.6" stroke="rgb(32, 217, 231)"/><path d="M415.5 1051.6 L411.4 1048.2" stroke="rgb(32, 218, 230)"/><path d="M411.4 1048.2 L407.4 1044.8" stroke="rgb(32, 220, 229)"/><path d="M407.4 1044.8 L403.4 1041.3" stroke="rgb(32, 221, 229)"/><path d="M403.4 1041.3 L399.4 1037.9" stroke="rgb(32, 222, 228)"/><path d="M399.4 1037.9 L395.3 1034.4" stroke="rgb(32, 224, 227)"/><path d="M395.3 1034.4 L391.3 1030.9" stroke="rgb(32, 225, 227)"/><path d="M391.3 1030.9 L387.3 1027.4" stroke="rgb(32, 227, 226)"/><path d="M387.3 1027.4 L383.3 1023.8" stroke="rgb(32, 228, 225)"/><path d="M383.3 1023.8 L379.2 1020.2" stroke="rgb(32, 229, 225)"/><path d="M379.2 1020.2 L375.2 1015.9" stroke="rgb(32, 231, 224)"/><path d="M375.2 1015.9 L372.2 1011.9" stroke="rgb(32, 232, 223)"/><path d="M372.2 1011.9 L369.1 1007.8" stroke="rgb(32, 232, 221)"/><path d="M369.1 1007.8 L366.0 1003.8" stroke="rgb(32, 232, 220)"/><path d="M366.0 1003.8 L363.0 999.8" stroke="rgb(33, 232, 218)"/><path d="M363.0 999.8 L360.0 995.7" stroke="rgb(33, 232, 217)"/><path d="M360.0 995.7 L357.0 991.7" stroke="rgb(34, 232, 215)"/><path d="M357.0 991.7 L354.1 987.7" stroke="rgb(34, 232, 214)"/><path d="M354.1 987.7 L351.1 983.7" stroke="rgb(34, 232, 212)"/><path d="M351.1 983.7 L348.3 979.6" stroke="rgb(35, 232, 211)"/><path d="M348.3 979.6 L345.4 975.6" stroke="rgb(35, 232, 209)"/><path d="M345.4 975.6 L342.5 971.6" stroke="rgb(35, 232, 208)"/><path d="M342.5 971.6 L339.7 967.5" stroke="rgb(36, 232, 206)"/><path d="M339.7 967.5 L336.9 963.5" stroke="rgb(36, 232, 205)"/><path d="M336.9 963.5 L334.2 959.5" stroke="rgb(37, 232, 203)"/><path d="M334.2 959.5 L331.4 955.4" stroke="rgb(37, 232, 202)"/><path d="M331.4 955.4 L328.7 951.4" stroke="rgb(37, 232, 201)"/><path d="M328.7 951.4 L326.0 947.4" stroke="rgb(38, 232, 199)"/><path d="M326.0 947.4 L323.4 943.4" stroke="rgb(38, 232, 198)"/><path d="M323.4 943.4 L320.7 939.3" stroke="rgb(38, 232, 196)"/><path d="M320.7 939.3 L318.1 935.3" stroke="rgb(39, 232, 195)"/><path d="M318.1 935.3 L315.5 931.3" stroke="rgb(39, 232, 193)"/><path d="M315.5 931.3 L312.9 927.2" stroke="rgb(39, 232, 192)"/><path d="M312.9 927.2 L310.4 923.2" stroke="rgb(40, 232, 190)"/><path d="M310.4 923.2 L307.9 919.2" stroke="rgb(40, 232, 187)"/><path d="M307.9 919.2 L305.4 915.1" stroke="rgb(40, 232, 185)"/><path d="M305.4 915.1 L302.9 911.1" stroke="rgb(40, 232, 182)"/><path d="M302.9 911.1 L300.5 907.1" stroke="rgb(40, 232, 180)"/><path d="M300.5 907.1 L298.1 903.0" stroke="rgb(40, 232, 178)"/><path d="M298.1 903.0 L295.7 899.0" stroke="rgb(40, 232, 175)"/><path d="M295.7 899.0 L293.3 895.0" stroke="rgb(40, 232, 173)"/><path d="M293.3 895.0 L291.0 891.0" stroke="rgb(40, 232, 170)"/><path d="M291.0 891.0 L288.7 886.9" stroke="rgb(40, 232, 168)"/><path d="M288.7 886.9 L286.4 882.9" stroke="rgb(40, 232, 166)"/><path d="M286.4 882.9 L284.1 878.9" stroke="rgb(40, 232, 163)"/><path d="M284.1 878.9 L281.8 874.8" stroke="rgb(40, 232, 161)"/><path d="M281.8 874.8 L279.6 870.8" stroke="rgb(40, 232, 159)"/><path d="M279.6 870.8 L277.4 866.8" stroke="rgb(40, 232, 157)"/><path d="M277.4 866.8 L275.2 862.7" stroke="rgb(40, 232, 156)"/><path d="M275.2 862.7 L273.1 858.7" stroke="rgb(40, 232, 154)"/><path d="M273.1 858.7 L271.0 854.7" stroke="rgb(40, 232, 152)"/><path d="M271.0 854.7 L268.8 850.7" stroke="rgb(40, 232, 151)"/><path d="M268.8 850.7 L266.8 846.6" stroke="rgb(40, 232, 149)"/><path d="M266.8 846.6 L264.7 842.6" stroke="rgb(40, 232, 147)"/><path d="M264.7 842.6 L262.7 838.6" stroke="rgb(40, 232, 146)"/><path d="M262.7 838.6 L260.6 834.5" stroke="rgb(40, 232, 144)"/><path d="M260.6 834.5 L258.7 830.5" stroke="rgb(40, 232, 143)"/><path d="M258.7 830.5 L256.7 826.5" stroke="rgb(40, 232, 141)"/><path d="M256.7 826.5 L254.7 822.4" stroke="rgb(40, 232, 139)"/><path d="M254.7 822.4 L252.8 818.4" stroke="rgb(40, 232, 138)"/><path d="M252.8 818.4 L250.9 814.4" stroke="rgb(40, 232, 136)"/><path d="M250.9 814.4 L249.0 810.3" stroke="rgb(40, 232, 135)"/><path d="M249.0 810.3 L247.2 806.3" stroke="rgb(40, 232, 133)"/><path d="M247.2 806.3 L245.3 802.3" stroke="rgb(40, 232, 132)"/><path d="M245.3 802.3 L243.5 798.3" stroke="rgb(40, 232, 130)"/><path d="M243.5 798.3 L241.7 794.2" stroke="rgb(40, 232, 128)"/><path d="M241.7 794.2 L240.0 790.2" stroke="rgb(40, 232, 127)"/><path d="M240.0 790.2 L238.2 786.2" stroke="rgb(40, 232, 125)"/><path d="M238.2 786.2 L236.5 782.1" stroke="rgb(40, 232, 123)"/><path d="M236.5 782.1 L234.8 778.1" stroke="rgb(41, 232, 122)"/><path d="M234.8 778.1 L233.1 774.1" stroke="rgb(41, 232, 120)"/><path d="M233.1 774.1 L231.4 770.0" stroke="rgb(41, 232, 118)"/><path d="M231.4 770.0 L229.8 766.0" stroke="rgb(42, 232, 117)"/><path d="M229.8 766.0 L228.2 762.0" stroke="rgb(42, 232, 115)"/><path d="M228.2 762.0 L226.6 758.0" stroke="rgb(42, 232, 113)"/><path d="M226.6 758.0 L225.0 753.9" stroke="rgb(43, 232, 111)"/><path d="M225.0 753.9 L223.4 749.9" stroke="rgb(43, 232, 110)"/><path d="M223.4 749.9 L221.9 745.9" stroke="rgb(43, 232, 108)"/><path d="M221.9 745.9 L220.4 741.8" stroke="rgb(44, 232, 106)"/><path d="M220.4 741.8 L218.9 737.8" stroke="rgb(44, 232, 105)"/><path d="M218.9 737.8 L217.4 733.8" stroke="rgb(44, 232, 103)"/><path d="M217.4 733.8 L215.9 729.7" stroke="rgb(45, 232, 101)"/><path d="M215.9 729.7 L214.5 725.7" stroke="rgb(45, 232, 100)"/><path d="M214.5 725.7 L213.1 721.7" stroke="rgb(45, 232, 98)"/><path d="M213.1 721.7 L211.7 717.6" stroke="rgb(46, 232, 96)"/><path d="M211.7 717.6 L210.3 713.6" stroke="rgb(46, 232, 95)"/><path d="M210.3 713.6 L208.9 709.6" stroke="rgb(46, 232, 93)"/><path d="M208.9 709.6 L207.6 705.6" stroke="rgb(47, 232, 91)"/><path d="M207.6 705.6 L206.3 701.5" stroke="rgb(47, 232, 89)"/><path d="M206.3 701.5 L205.0 697.5" stroke="rgb(47, 232, 88)"/><path d="M205.0 697.5 L203.7 693.5" stroke="rgb(47, 232, 86)"/><path d="M203.7 693.5 L202.5 689.4" stroke="rgb(47, 232, 85)"/><path d="M202.5 689.4 L201.2 685.4" stroke="rgb(46, 232, 83)"/><path d="M201.2 685.4 L200.0 681.4" stroke="rgb(46, 232, 82)"/><path d="M200.0 681.4 L198.8 677.3" stroke="rgb(46, 232, 80)"/><path d="M198.8 677.3 L197.6 673.3" stroke="rgb(45, 232, 79)"/><path d="M197.6 673.3 L196.5 669.3" stroke="rgb(45, 232, 77)"/><path d="M196.5 669.3 L195.3 665.2" stroke="rgb(45, 232, 76)"/><path d="M195.3 665.2 L194.2 661.2" stroke="rgb(44, 232, 74)"/><path d="M194.2 661.2 L193.1 657.2" stroke="rgb(44, 232, 73)"/><path d="M193.1 657.2 L192.0 653.2" stroke="rgb(43, 232, 71)"/><path d="M192.0 653.2 L190.9 649.1" stroke="rgb(43, 232, 70)"/><path d="M190.9 649.1 L189.9 645.1" stroke="rgb(43, 232, 68)"/><path d="M189.9 645.1 L188.8 641.1" stroke="rgb(42, 232, 67)"/><path d="M188.8 641.1 L187.8 637.0" stroke="rgb(42, 232, 66)"/><path d="M187.8 637.0 L186.8 633.0" stroke="rgb(42, 232, 64)"/><path d="M186.8 633.0 L185.9 629.0" stroke="rgb(41, 232, 63)"/><path d="M185.9 629.0 L184.9 624.9" stroke="rgb(41, 232, 61)"/><path d="M184.9 624.9 L184.0 620.9" stroke="rgb(41, 232, 60)"/><path d="M184.0 620.9 L183.0 616.9" stroke="rgb(40, 232, 58)"/><path d="M183.0 616.9 L182.1 612.9" stroke="rgb(40, 232, 57)"/><path d="M182.1 612.9 L181.2 608.8" stroke="rgb(39, 231, 55)"/><path d="M181.2 608.8 L180.4 604.8" stroke="rgb(39, 231, 54)"/><path d="M180.4 604.8 L179.5 600.8" stroke="rgb(39, 231, 54)"/><path d="M179.5 600.8 L178.7 596.7" stroke="rgb(39, 231, 53)"/><path d="M178.7 596.7 L177.8 592.7" stroke="rgb(38, 231, 52)"/><path d="M177.8 592.7 L177.0 588.7" stroke="rgb(38, 230, 51)"/><path d="M177.0 588.7 L176.3 584.6" stroke="rgb(38, 230, 50)"/><path d="M176.3 584.6 L175.5 580.6" stroke="rgb(37, 230, 49)"/><path d="M175.5 580.6 L174.7 576.6" stroke="rgb(37, 230, 48)"/><path d="M174.7 576.6 L174.0 572.5" stroke="rgb(37, 230, 48)"/><path d="M174.0 572.5 L173.3 568.5" stroke="rgb(37, 229, 47)"/><path d="M173.3 568.5 L172.6 564.5" stroke="rgb(36, 229, 46)"/><path d="M172.6 564.5 L171.9 560.5" stroke="rgb(36, 229, 45)"/><path d="M171.9 560.5 L171.2 556.4" stroke="rgb(36, 229, 44)"/><path d="M171.2 556.4 L170.6 552.4" stroke="rgb(35, 228, 43)"/><path d="M170.6 552.4 L169.9 548.4" stroke="rgb(35, 228, 42)"/><path d="M169.9 548.4 L169.3 544.3" stroke="rgb(35, 228, 41)"/><path d="M169.3 544.3 L168.7 540.3" stroke="rgb(35, 228, 41)"/><path d="M168.7 540.3 L168.1 536.3" stroke="rgb(34, 228, 40)"/><path d="M168.1 536.3 L167.5 532.2" stroke="rgb(34, 227, 39)"/><path d="M167.5 532.2 L167.0 528.2" stroke="rgb(34, 227, 38)"/><path d="M167.0 528.2 L166.4 524.2" stroke="rgb(33, 227, 37)"/><path d="M166.4 524.2 L165.9 520.2" stroke="rgb(33, 227, 36)"/><path d="M165.9 520.2 L165.4 516.1" stroke="rgb(33, 226, 35)"/><path d="M165.4 516.1 L164.9 512.1" stroke="rgb(33, 226, 35)"/><path d="M164.9 512.1 L164.4 508.1" stroke="rgb(32, 226, 34)"/><path d="M164.4 508.1 L163.9 504.0" stroke="rgb(32, 226, 33)"/><path d="M163.9 504.0 L163.8 500.0" stroke="rgb(32, 226, 32)"/></g>
<path d="M592.5 932.5 H603.5 M598 927 V938" stroke="#f0f0f0" stroke-width="1.6"/>
<circle cx="612" cy="26" r="10.2" fill="#f0f0f0"/>
<text x="612.3" y="33" text-anchor="middle" font-family="Liberation Sans" font-weight="bold" font-size="19" fill="#2a2a2a">?</text>
<rect x="638" y="17" width="20.3" height="18.3" rx="1" fill="#f8f8f8"/>
<path d="M640.4 31.8 L640.6 30 L643 25.5 Q643.8 24.2 644.8 25.3 L648.6 29.4 L651.3 27.3 Q652 26.8 652.7 27.4 L656 30.5 L656 31.8 Z" fill="#333"/><circle cx="653.6" cy="22.2" r="2" fill="#333"/>
<defs><linearGradient id="g3d" x1="0" y1="0" x2="0" y2="1"><stop offset="0" stop-color="#f8d898"/><stop offset="0.55" stop-color="#f4a070"/><stop offset="1" stop-color="#f08050"/></linearGradient><linearGradient id="gtri" x1="0" y1="0" x2="0" y2="1"><stop offset="0" stop-color="#f8c868"/><stop offset="1" stop-color="#f8a868"/></linearGradient></defs>
<text transform="translate(690.3 33) rotate(-17) scale(0.9 1.25)" text-anchor="middle" font-family="Liberation Sans" font-weight="700" font-size="17" fill="url(#g3d)" stroke="url(#g3d)" stroke-width="1.3" stroke-linejoin="round">3D</text>
<path d="M708.5 20.3 L721.5 20.3 Q722.3 20.5 721.8 21.3 L715.6 29.6 Q715 30.3 714.4 29.6 L708.2 21.3 Q707.7 20.5 708.5 20.3 Z" fill="url(#gtri)"/>
<g font-family="Liberation Sans" font-size="18" fill="#a8a8a8"><text x="224" y="1706" letter-spacing="0.37">Whitepoint</text><text x="372" y="1706" letter-spacing="0.15">Whitepoint (Comparison profile)</text></g>
<path d="M197 1699 H209 M203 1693 V1705" stroke="#e8e8e8" stroke-width="1.6"/>
<path d="M345 1693 L357 1705 M357 1693 L345 1705" stroke="#c8c8c8" stroke-width="1.4"/>
</svg>
</div>
<div id="strip"></div><svg style="position:absolute;left:1080px;top:996px" width="16" height="16"><path d="M3 8.5 L6.7 4.8 L6.7 12.2 Z M8.3 4.8 L12 8.5 L8.3 12.2 Z" fill="#9a9a9a"/></svg>
<div id="panel"><div class="hdr"></div>
<div class="r" style="top:21px"><span class="l" style="left:34px;letter-spacing:-0.700px">Size</span><span class="v" style="letter-spacing:-0.269px">1179696 Bytes (1152.05 KiB)</span></div>
<div class="r d" style="top:50px"><span class="l" style="left:34px;letter-spacing:-0.175px">Preferred CMM</span><span class="v" style="letter-spacing:-0.150px">0x6172676C 'argl' ArgyllCMS</span></div>
<div class="r" style="top:79px"><span class="l" style="left:34px;letter-spacing:-0.470px">ICC version</span><span class="v" style="letter-spacing:-0.600px">2.2</span></div>
<div class="r d" style="top:108px"><span class="l" style="left:34px;letter-spacing:-0.408px">Profile class</span><span class="v" style="letter-spacing:-0.029px">Display device profile</span></div>
<div class="r" style="top:137px"><span class="l" style="left:34px;letter-spacing:0.250px">Color model</span><span class="v" style="letter-spacing:-0.700px">RGB</span></div>
<div class="r d" style="top:166px"><span class="l" style="left:34px;letter-spacing:-0.410px">Profile connection space (PCS)</span><span class="v" style="letter-spacing:-0.700px">XYZ</span></div>
<div class="r" style="top:195px"><span class="l" style="left:34px;letter-spacing:-0.367px">Created</span><span class="v" style="letter-spacing:0.000px">2022-08-17 17:41:55</span></div>
<div class="r d" style="top:224px"><span class="l" style="left:34px;letter-spacing:0.186px">Platform</span><span class="v" style="letter-spacing:0.400px">Microsoft</span></div>
<div class="r" style="top:253px"><span class="l" style="left:34px;letter-spacing:0.120px">Is embedded</span><span class="v" style="letter-spacing:0.400px">No</span></div>
<div class="r d" style="top:282px"><span class="l" style="left:34px;letter-spacing:-0.142px">Can be used independently</span><span class="v" style="letter-spacing:-0.700px">Yes</span></div>
<div class="r" style="top:311px"><span class="l" style="left:34px;letter-spacing:-0.540px">Device</span><span class="v" style=""></span></div>
<div class="r d" style="top:340px"><span class="l" style="left:54px;letter-spacing:-0.164px">Manufacturer</span><span class="v" style="letter-spacing:-0.100px">0x00000000</span></div>
<div class="r" style="top:369px"><span class="l" style="left:54px;letter-spacing:0.400px">Model</span><span class="v" style="letter-spacing:-0.100px">0x00000000</span></div>
<div class="r d" style="top:398px"><span class="l" style="left:54px;letter-spacing:0.067px">Media attributes</span><span class="v" style="letter-spacing:-0.312px">Reflective, Glossy, Positive, Color</span></div>
<div class="r" style="top:427px"><span class="l" style="left:34px;letter-spacing:0.022px">Default rendering intent</span><span class="v" style="letter-spacing:-0.311px">Perceptual</span></div>
<div class="r d" style="top:456px"><span class="l" style="left:34px;letter-spacing:-0.565px">PCS illuminant XYZ</span><span class="v" style="">96.42 100.00&nbsp; 82.49 (xy 0.3457 0.3585, CCT 5000K)</span></div>
<div class="r" style="top:485px"><span class="l" style="left:34px;letter-spacing:-0.317px">Creator</span><span class="v" style="letter-spacing:-0.419px">0x4443414C 'DCAL' DisplayCAL</span></div>
<div class="r d" style="top:514px"><span class="l" style="left:34px;letter-spacing:-0.500px">Checksum</span><span class="v" style="letter-spacing:-0.470px">0x3732C61873E06B0178CB4E161DB13678</span></div>
<div class="r" style="top:543px"><span class="l" style="left:54px;letter-spacing:-0.610px">Checksum OK</span><span class="v" style="letter-spacing:-0.700px">Yes</span></div>
<div class="r d" style="top:572px"><span class="l" style="left:34px;letter-spacing:-0.328px">Description (ASCII)</span><span class="v" style="letter-spacing:-0.133px">test</span></div>
<div class="r" style="top:601px"><span class="l" style="left:34px;letter-spacing:0.188px">Copyright</span><span class="v" style="letter-spacing:-0.180px">No copyright. Created with DisplayCAL 3.8.9.3 and</span></div>
<div class="r d" style="top:630px"><span class="l" style="left:34px"></span><span class="v" style="letter-spacing:-0.243px">ArgyllCMS 2.3.0</span></div>
<div class="r" style="top:659px"><span class="l" style="left:34px;letter-spacing:-0.296px">Device model name (ASCII)</span><span class="v" style="letter-spacing:0.300px">Web</span></div>
<div class="r d" style="top:688px"><span class="l" style="left:34px;letter-spacing:-0.425px">Luminance</span><span class="v" style="letter-spacing:0.236px">213.47 cd/m²</span></div>
<div class="r" style="top:717px"><span class="l" style="left:34px;letter-spacing:0.206px">Media white point</span><span class="v" style=""></span></div>
<div class="r d" style="top:746px"><span class="l" style="left:54px;letter-spacing:-0.100px">Is illuminant</span><span class="v" style="letter-spacing:-0.700px">Yes</span></div>
<div class="r" style="top:775px"><span class="l" style="left:54px;letter-spacing:-0.186px">Illuminant-relative XYZ</span><span class="v" style="letter-spacing:-0.200px">95.16 100.00 107.95 (xy 0.3140 0.3299)</span></div>
<div class="r d" style="top:804px"><span class="l" style="left:54px;letter-spacing:-0.277px">Illuminant-relative CCT</span><span class="v" style="letter-spacing:-0.200px">6429K</span></div>
<div class="r" style="top:833px"><span class="l" style="left:74px;letter-spacing:-0.042px">ΔE 2000 to daylight locus</span><span class="v" style="letter-spacing:0.000px">0.36</span></div>
<div class="r d" style="top:862px"><span class="l" style="left:74px;letter-spacing:-0.004px">ΔE 2000 to blackbody locus</span><span class="v" style="letter-spacing:0.000px">4.36</span></div>
<div class="r" style="top:891px"><span class="l" style="left:34px;letter-spacing:0.125px">Media black point</span><span class="v" style=""></span></div>
<div class="r d" style="top:920px"><span class="l" style="left:54px;letter-spacing:-0.186px">Illuminant-relative XYZ</span><span class="v" style="letter-spacing:-0.200px">0.5417 0.5692 0.6134 (xy 0.3142 0.3301)</span></div>
<div class="r" style="top:949px"><span class="l" style="left:54px;letter-spacing:-0.277px">Illuminant-relative CCT</span><span class="v" style="letter-spacing:-0.200px">6417K</span></div>
<div class="r d" style="top:978px"><span class="l" style="left:74px;letter-spacing:-0.042px">ΔE 2000 to daylight locus</span><span class="v" style="letter-spacing:0.000px">0.39</span></div>
<div class="r" style="top:1007px"><span class="l" style="left:74px;letter-spacing:-0.004px">ΔE 2000 to blackbody locus</span><span class="v" style="letter-spacing:-0.333px">4.34</span></div>
<div class="r d" style="top:1036px"><span class="l" style="left:34px;letter-spacing:0.086px">Absolute to media relative transform</span><span class="v" style="letter-spacing:-0.104px">Bradford (ICC recommendation)</span></div>
<div class="r" style="top:1065px"><span class="l" style="left:54px;letter-spacing:0.120px">Matrix</span><span class="v" style="letter-spacing:-0.140px">0.8951 0.2664 -0.1614</span></div>
<div class="r d" style="top:1094px"><span class="l" style="left:34px"></span><span class="v" style="letter-spacing:-0.140px">-0.7502 1.7135 0.0367</span></div>
<div class="r" style="top:1123px"><span class="l" style="left:34px"></span><span class="v" style="letter-spacing:-0.140px">0.0389 -0.0685 1.0296</span></div>
<div class="r d" style="top:1152px"><span class="l" style="left:34px;letter-spacing:0.024px">Video card gamma table</span><span class="v" style=""></span></div>
<div class="r" style="top:1181px"><span class="l" style="left:54px;letter-spacing:0.186px">Bitdepth</span><span class="v" style="letter-spacing:0.300px">16</span></div>
<div class="r d" style="top:1210px"><span class="l" style="left:54px;letter-spacing:-0.700px">Channels</span><span class="v" style="letter-spacing:-0.300px">3</span></div>
<div class="r" style="top:1239px"><span class="l" style="left:54px;letter-spacing:-0.057px">Number of entries per channel</span><span class="v" style="letter-spacing:0.150px">256</span></div>
<div class="r d" style="top:1268px"><span class="l" style="left:54px;letter-spacing:-0.096px">Channel 1 gamma at 50% input</span><span class="v" style="letter-spacing:-0.067px">1.05</span></div>
<div class="r" style="top:1297px"><span class="l" style="left:54px;letter-spacing:-0.013px">Channel 1 minimum</span><span class="v" style="letter-spacing:-0.317px">0.0000%</span></div>
<div class="r d" style="top:1326px"><span class="l" style="left:54px;letter-spacing:-0.131px">Channel 1 maximum</span><span class="v" style="letter-spacing:-0.317px">100.00%</span></div>
<div class="r" style="top:1355px"><span class="l" style="left:54px;letter-spacing:-0.341px">Channel 1 unique values</span><span class="v" style="letter-spacing:-0.170px">256 @ 8 Bit</span></div>
<div class="r d" style="top:1384px"><span class="l" style="left:54px;letter-spacing:-0.428px">Channel 1 is linear</span><span class="v" style="letter-spacing:0.400px">No</span></div>
<div class="r" style="top:1413px"><span class="l" style="left:54px;letter-spacing:-0.096px">Channel 2 gamma at 50% input</span><span class="v" style="letter-spacing:-0.067px">1.07</span></div>
<div class="r d" style="top:1442px"><span class="l" style="left:54px;letter-spacing:-0.013px">Channel 2 minimum</span><span class="v" style="letter-spacing:-0.317px">0.0000%</span></div>
<div class="r" style="top:1471px"><span class="l" style="left:54px;letter-spacing:-0.131px">Channel 2 maximum</span><span class="v" style="letter-spacing:-0.380px">98.76%</span></div>
<div class="r d" style="top:1500px"><span class="l" style="left:54px;letter-spacing:-0.341px">Channel 2 unique values</span><span class="v" style="letter-spacing:-0.170px">256 @ 8 Bit</span></div>
<div class="r" style="top:1529px"><span class="l" style="left:54px;letter-spacing:-0.428px">Channel 2 is linear</span><span class="v" style="letter-spacing:0.400px">No</span></div>
<div class="r d" style="top:1558px"><span class="l" style="left:54px;letter-spacing:-0.096px">Channel 3 gamma at 50% input</span><span class="v" style="letter-spacing:-0.067px">1.08</span></div>
<div class="r" style="top:1587px"><span class="l" style="left:54px;letter-spacing:-0.013px">Channel 3 minimum</span><span class="v" style="letter-spacing:-0.317px">0.0000%</span></div>
<div class="r d" style="top:1616px"><span class="l" style="left:54px;letter-spacing:-0.131px">Channel 3 maximum</span><span class="v" style="letter-spacing:-0.380px">98.91%</span></div>
<div class="r" style="top:1645px"><span class="l" style="left:54px;letter-spacing:-0.341px">Channel 3 unique values</span><span class="v" style="letter-spacing:-0.170px">256 @ 8 Bit</span></div>
<div class="r d" style="top:1674px"><span class="l" style="left:54px;letter-spacing:-0.428px">Channel 3 is linear</span><span class="v" style="letter-spacing:0.400px">No</span></div>
<div class="r" style="top:1703px"><span class="l" style="left:34px">Device to PCS: Intent 0</span><span class="v" style=""></span></div>
</div>
<div id="sb"></div><div id="sbt"></div>
<div id="dlg">
 <div class="t" style="left:-11px;top:7px;letter-spacing:-0.42px">DisplayCAL</div>
 <svg style="position:absolute;left:560px;top:3px" width="26" height="26"><path d="M5.5 5 L19.5 19 M19.5 5 L5.5 19" stroke="#000" stroke-width="1.4"/></svg>

 <div style="position:absolute;left:5.5px;top:53.5px;width:44.8px;height:44.6px;border-radius:50%;background:conic-gradient(#6cd46c 0deg,#d4d860 60deg,#d49a6c 105deg,#d06c6c 145deg,#d070d0 185deg,#8c70d0 220deg,#6c7cc8 250deg,#6cb8c8 290deg,#6cd4a0 330deg,#6cd46c 360deg)"></div>
 <div style="position:absolute;left:8.3px;top:56.3px;width:39.2px;height:39px;border-radius:50%;background:radial-gradient(circle at 50% 50%,rgba(255,255,255,0.95) 0%,rgba(255,255,255,0.5) 45%,rgba(255,255,255,0) 75%),conic-gradient(#b4f4b4 0deg,#f4f8b0 60deg,#ffdcc0 110deg,#ffc4c4 145deg,#ffc0f8 185deg,#ccc0ff 225deg,#b8dcff 260deg,#b0fcfc 295deg,#b8f8d8 330deg,#b4f4b4 360deg)"></div>
 <div style="position:absolute;left:24.1px;top:63.2px;width:7.6px;height:7.6px;border-radius:50%;background:#585858"></div>
 <div style="position:absolute;left:25.2px;top:73.2px;width:5.6px;height:14.8px;background:linear-gradient(#444,#111)"></div>
 <div class="t" style="left:70px;top:56px;letter-spacing:0.11px">Calibration and profiling complete!</div>
 <div class="t" style="left:70px;top:106px;letter-spacing:-0.28px">Profile self check ΔE*76: average 0.27, maximum 8.30, RMS 1.09</div>
 <div class="t" style="left:70px;top:153px;font-weight:bold">Gamut coverage</div>
 <div class="t" style="left:252px;top:153px;font-weight:bold">Gamut volume</div>
 <div class="t" style="left:70px;top:179px;letter-spacing:-0.9px">97.6% sRGB</div>
 <div class="t" style="left:70px;top:204px;letter-spacing:-0.33px">88.5% Adobe RGB</div>
 <div class="t" style="left:70px;top:229px;letter-spacing:-0.55px">93.3% DCI P3</div>
 <div class="t" style="left:252px;top:179px;letter-spacing:-0.88px">148.3% sRGB</div>
 <div class="t" style="left:252px;top:204px;letter-spacing:-0.33px">102.2% Adobe RGB</div>
 <div class="t" style="left:252px;top:229px;letter-spacing:-0.5px">105.1% DCI P3</div>
 <div style="position:absolute;left:70px;top:275px;width:20px;height:20px;border:1px solid #333;background:#fff"></div>
 <svg style="position:absolute;left:70px;top:275px" width="20" height="20"><path d="M3.5 10 L8 15 L17 4" fill="none" stroke="#222" stroke-width="1.5"/></svg>
 <div class="t" style="left:95px;top:276px;letter-spacing:0.22px">Show profile information</div>
 <div class="ft"></div>
 <div class="btn" style="left:271px;top:335px;width:123px;letter-spacing:-1px;line-height:42px">Cancel</div>
 <div class="btn" style="left:414px;top:335px;width:164px;letter-spacing:-0.8px;line-height:42px">Save 3D LUT as...</div>
</div>
</body></html>
